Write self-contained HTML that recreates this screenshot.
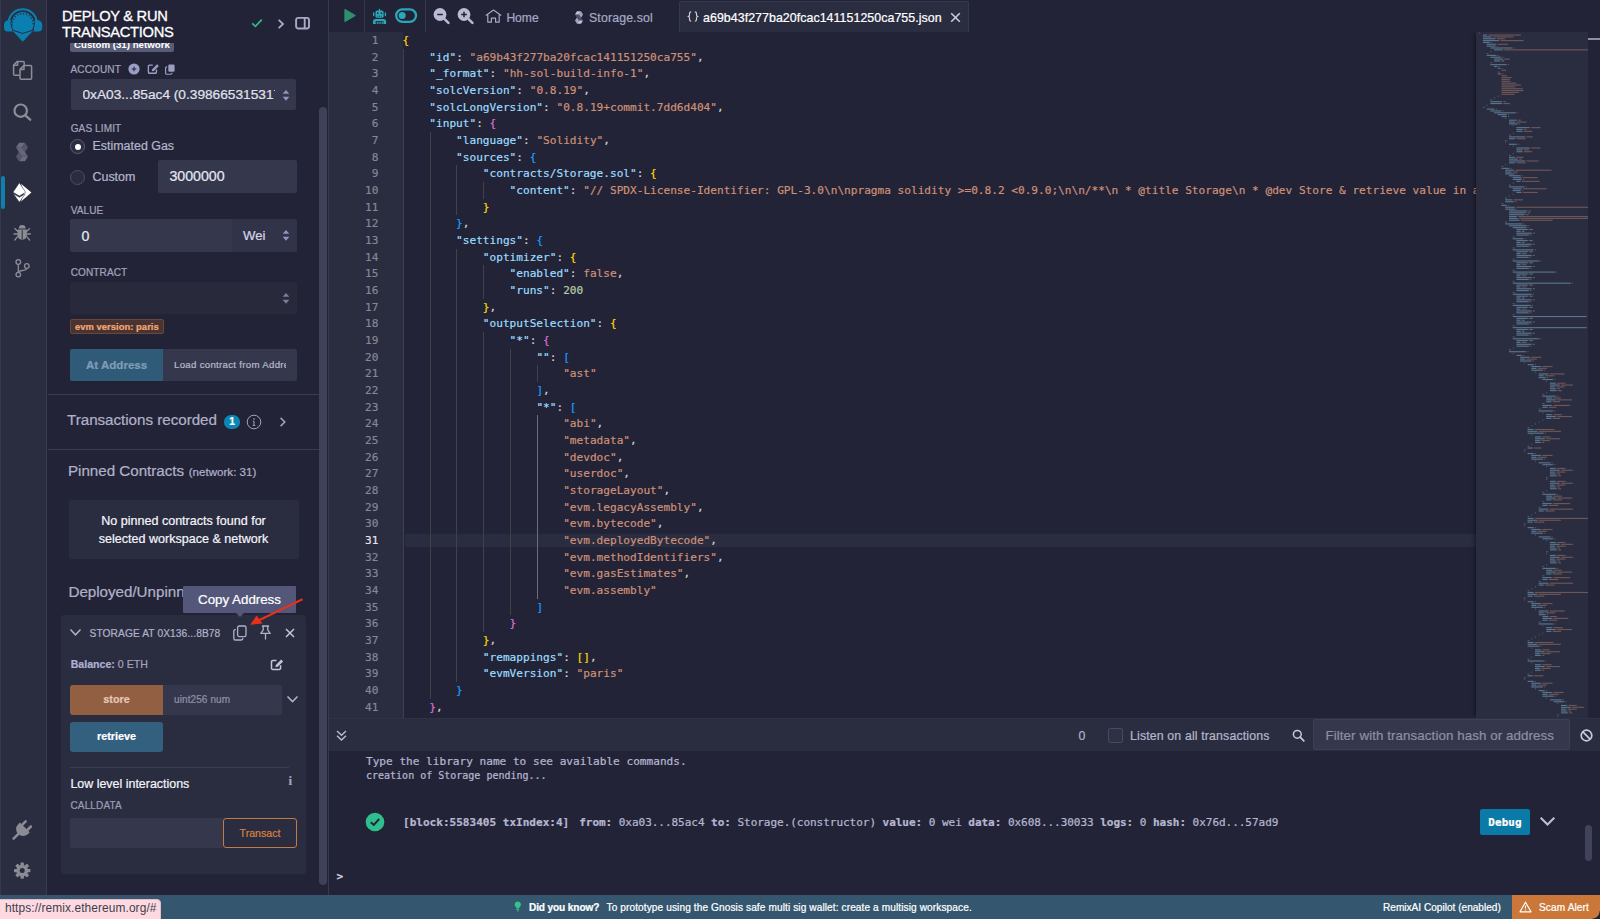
<!DOCTYPE html>
<html lang="en">
<head>
<meta charset="utf-8">
<title>Remix - Ethereum IDE</title>
<style>
*{box-sizing:border-box;margin:0;padding:0}
html,body{width:1600px;height:919px;overflow:hidden;background:#222336}
body{font-family:"Liberation Sans",sans-serif;color:#a2a3bd;font-size:12px;position:relative}
.abs{position:absolute}
#iconpanel{position:absolute;left:0;top:0;width:47px;height:895px;background:#2a2c3f;border-right:1px solid #3a3c51}
#sidepanel{position:absolute;left:47px;top:0;width:281px;height:895px;background:#222336;overflow:hidden}
#main{position:absolute;left:329.4px;top:0;width:1270.6px;height:895px;background:#222336;overflow:hidden}
#gap{position:absolute;left:327.8px;top:0;width:1.6px;height:895px;background:#383a50}
#status{position:absolute;left:0;top:895px;width:1600px;height:24px;background:#34566e}
.t{position:absolute;white-space:nowrap;line-height:1;-webkit-text-stroke:.22px currentColor}
.lbl{position:absolute;white-space:nowrap;line-height:1;font-size:10.05px;color:#a2a3bd;letter-spacing:.1px;-webkit-text-stroke:.22px currentColor}
.inp{position:absolute;background:#35384c;border-radius:2px}
.ico{position:absolute;display:block}
/* editor */
.cl{position:absolute;left:402.6px;height:16.67px;line-height:16.67px;white-space:pre;font-family:"DejaVu Sans Mono","Liberation Mono",monospace;font-size:11.125px;color:#d4d4d4;-webkit-text-stroke:.2px currentColor}
.ln{position:absolute;left:330px;width:48.5px;text-align:right;height:16.67px;line-height:16.67px;font-family:"DejaVu Sans Mono","Liberation Mono",monospace;font-size:11.125px;color:#858699;-webkit-text-stroke:.2px currentColor}
.ln.cur{color:#e4e4ee}
.cl span{-webkit-text-stroke:.2px currentColor}
.k{color:#9cdcfe}.s{color:#ce9178}.p{color:#d4d4d4}.n{color:#b5cea8}.kw{color:#ce9178}
.b0{color:#ffd700}.b1{color:#da70d6}.b2{color:#179fff}
.ig{position:absolute;width:1px;background:#404149}
.ig.act{background:#6c6d78}
.mono{font-family:"DejaVu Sans Mono","Liberation Mono",monospace}
</style>
</head>
<body>
<!-- ICON PANEL -->
<div id="iconpanel">
<div class="abs" style="left:0;top:0;width:1px;height:895px;background:#363850"></div>
<!-- remix logo -->
<svg class="ico" style="left:0;top:0" width="47" height="47" viewBox="0 0 47 47">
 <path d="M8.700 21.500C9.900 13.700 15.600 9.300 22.700 9.300s12.800 4.400 14 12.200" fill="none" stroke="#0b80b0" stroke-width="2.100"/>
 <path d="M12.600 20.200v11.200H7.600a3.600 3.600 0 0 1-3.600-3.600v-3a4.600 4.600 0 0 1 4.600-4.600z" fill="#0b80b0"/>
 <path d="M33.600 20.200v11.200h5a3.600 3.600 0 0 0 3.600-3.600v-3a4.600 4.600 0 0 0-4.600-4.600z" fill="#0b80b0"/>
 <path d="M13.200 31H32.400L22.700 41.300z" fill="#0b80b0" stroke="#0b80b0" stroke-width=".8" stroke-linejoin="round"/>
 <path d="M12.200 28.400A11.700 11.700 0 1 1 33.200 28.400L32.300 30.400 22.700 33.400 13.100 30.400z" fill="#0b80b0" stroke="#2a2035" stroke-width=".9" stroke-linejoin="round"/>
 <path d="M12.300 25.600A10.500 10.500 0 1 1 33.100 25.600" fill="none" stroke="#2a2c3f" stroke-width="1.500" stroke-dasharray="1.250 1.750" opacity=".9"/>
</svg>
<!-- active marker -->
<div class="abs" style="left:1px;top:176px;width:4.300px;height:33px;background:#0f80ae;border-radius:2.500px"></div>
<svg class="ico" style="left:0;top:50px" width="47" height="845" viewBox="0 50 47 845">
 <!-- file explorer -->
 <g fill="none" stroke="#8d8d97" stroke-width="1.500" stroke-linejoin="round">
  <path d="M19.500 75.200H14.600a1 1 0 0 1-1-1V65l3.800-3.600h5.800a1 1 0 0 1 1 1v2.600"/>
  <path d="M17.600 61.600V65.200H13.800"/>
  <path d="M20 69.400l3.800-3.800h6.800a1 1 0 0 1 1 1v11.600a1 1 0 0 1-1 1H21a1 1 0 0 1-1-1z"/>
  <path d="M24 65.800v3.800H20.200"/>
 </g>
 <!-- search -->
 <circle cx="20.700" cy="110.700" r="6.200" fill="none" stroke="#8d8d97" stroke-width="2.200"/>
 <path d="M25.300 115.300L30.200 119.700" stroke="#8d8d97" stroke-width="2.400" stroke-linecap="round"/>
 <!-- solidity -->
 <g>
  <path d="M19 142.800h6l-3 4.800h-6z" fill="#6a6b7c"/><path d="M25 142.800l3 4.800-3 4.600-3-4.600z" fill="#55566a"/><path d="M16 147.600h6l3 4.600h-6z" fill="#77788a" opacity=".75"/>
  <path d="M25 161.200h-6l3-4.600h6z" fill="#6a6b7c"/><path d="M19 161.200l-3-4.600 3-4.600 3 4.600z" fill="#55566a"/><path d="M28 156.600h-6l-3-4.600h6z" fill="#77788a" opacity=".75"/>
 </g>
 <!-- deploy -->
 <path d="M21 183.800L31.400 192.600 21 201.400 24.400 192.600z" fill="#fff"/>
 <path d="M19.400 182.800L25.600 192.300 19.400 196 13 192.300z" fill="#fff" stroke="#2a2c3f" stroke-width=".5"/>
 <path d="M19.400 197.300L25.300 193.800 19.400 202.200 13.300 193.800z" fill="#fff" stroke="#2a2c3f" stroke-width=".5"/>
 <!-- debugger -->
 <g>
  <path d="M18.800 228.400a3.400 3.400 0 0 1 6.800 0z" fill="#8d8d97"/>
  <path d="M17.600 229.600h9.200v5.600a4.600 4.600 0 0 1-9.200 0z" fill="#8d8d97"/>
  <path d="M17.600 231.200L14.800 228.600M17.600 234H14M17.600 236.600L14.800 240M26.800 231.200L29.600 228.600M26.800 234H30.400M26.800 236.600L29.600 240" stroke="#8d8d97" stroke-width="1.300" stroke-linecap="round"/>
  <path d="M22.200 230.200v9.400" stroke="#2a2c3f" stroke-width="1"/>
 </g>
 <!-- git -->
 <g fill="none" stroke="#8d8d97" stroke-width="1.300">
  <circle cx="18.300" cy="262" r="2.300"/><circle cx="18.300" cy="274.600" r="2.300"/><circle cx="26.800" cy="266" r="2.300"/>
  <path d="M18.300 264.400V272.200M26.600 268.400c0 2.800-8.300 1.400-8.300 4"/>
 </g>
 <!-- plugin manager -->
 <g transform="translate(21.700 830.500) rotate(45)" fill="#8b8b95">
  <rect x="-5" y="-10.500" width="2.600" height="7" rx="1.200"/><rect x="2.400" y="-10.500" width="2.600" height="7" rx="1.200"/>
  <path d="M-7 -4.400H7V-2A7 7 0 0 1 -7 -2z"/>
  <rect x="-1.300" y="3.500" width="2.600" height="9.200" rx="1.200"/>
 </g>
 <!-- settings -->
 <g fill="#8b8b95">
  <circle cx="22.200" cy="870.600" r="5.900"/>
  <g transform="rotate(0 22.200 870.600)"><rect x="20.500" y="862.400" width="3.400" height="3.600" rx=".7"/><rect x="20.500" y="875.200" width="3.400" height="3.600" rx=".7"/></g><g transform="rotate(45 22.200 870.600)"><rect x="20.500" y="862.400" width="3.400" height="3.600" rx=".7"/><rect x="20.500" y="875.200" width="3.400" height="3.600" rx=".7"/></g><g transform="rotate(90 22.200 870.600)"><rect x="20.500" y="862.400" width="3.400" height="3.600" rx=".7"/><rect x="20.500" y="875.200" width="3.400" height="3.600" rx=".7"/></g><g transform="rotate(135 22.200 870.600)"><rect x="20.500" y="862.400" width="3.400" height="3.600" rx=".7"/><rect x="20.500" y="875.200" width="3.400" height="3.600" rx=".7"/></g>
 </g>
 <circle cx="22.200" cy="870.600" r="2.500" fill="#2a2c3f"/>
</svg>

</div>

<!-- SIDE PANEL -->
<div id="sidepanel">
<div class="abs" style="left:-47px;top:0;width:1600px;height:919px">
 <!-- header -->
 <div class="t" style="left:62px;top:7.5px;font-size:14.7px;line-height:16.3px;color:#fff;white-space:normal;width:130px;letter-spacing:-.3px;-webkit-text-stroke:.3px #fff">DEPLOY &amp; RUN TRANSACTIONS</div>
 <svg class="ico" style="left:251px;top:17px" width="12" height="12" viewBox="0 0 12 12"><path d="M1.2 6.4 L4.4 9.4 L10.8 2.6" fill="none" stroke="#32ba89" stroke-width="1.7"/></svg>
 <svg class="ico" style="left:277.300px;top:17.500px" width="8" height="12" viewBox="0 0 8 12"><path d="M1.700 1.800 L6 6 L1.700 10.200" fill="none" stroke="#a9aacb" stroke-width="1.800"/></svg>
 <svg class="ico" style="left:295px;top:16px" width="15" height="14" viewBox="0 0 15 14"><rect x="1.100" y="1.900" width="12.900" height="10.600" rx="2.200" fill="none" stroke="#a9aacb" stroke-width="1.900"/><path d="M9.700 1.900 V12.500" stroke="#a9aacb" stroke-width="1.900"/></svg>

 <!-- network badge (clipped on top) -->
 <div class="abs" style="left:70px;top:43px;width:104px;height:9px;overflow:hidden">
  <div class="abs" style="left:0;top:-8px;width:104px;height:16.5px;background:#595c76;border-radius:2px"></div>
  <div class="t" style="left:4px;top:-3.3px;font-size:9.700px;font-weight:bold;color:#fff;letter-spacing:0;-webkit-text-stroke:0">Custom (31) network</div>
 </div>

 <!-- ACCOUNT -->
 <div class="lbl" style="left:70.500px;top:64.700px">ACCOUNT</div>
 <svg class="ico" style="left:128px;top:63px" width="12" height="12" viewBox="0 0 12 12"><circle cx="6" cy="6" r="5.6" fill="#9a9ec4"/><path d="M6 3.700V8.300M3.700 6H8.300" stroke="#222336" stroke-width="1.050"/></svg>
 <svg class="ico" style="left:146.500px;top:62.800px" width="12.600" height="11.600" viewBox="0 0 13 12"><path d="M6 2.2H2.6a1.2 1.2 0 0 0-1.2 1.2v6a1.2 1.2 0 0 0 1.2 1.2h6a1.2 1.2 0 0 0 1.2-1.2V6.6" fill="none" stroke="#9a9ec4" stroke-width="1.4"/><path d="M5 8.6 L5.4 6.4 L10.4 1.4 L12.2 3.2 L7.2 8.2 Z" fill="#9a9ec4"/></svg>
 <svg class="ico" style="left:164.800px;top:63.800px" width="10" height="10.800" viewBox="0 0 11 12"><rect x="3.6" y="0.6" width="7" height="8" rx="1.3" fill="#9a9ec4"/><path d="M2.4 3.2H1.8a1.2 1.2 0 0 0-1.2 1.2v5.8a1.2 1.2 0 0 0 1.2 1.2h4.6a1.2 1.2 0 0 0 1.2-1.2v-.4" fill="none" stroke="#9a9ec4" stroke-width="1.3"/></svg>

 <div class="inp" style="left:71px;top:79.200px;width:225px;height:30.700px"></div>
 <div class="abs" style="left:82.500px;top:86px;width:192.500px;height:18px;overflow:hidden"><div class="t" style="left:0;top:1.5px;font-size:13.700px;color:#e0e1ee">0xA03...85ac4 (0.398665315317</div></div>
 <svg class="ico" style="left:282px;top:88.700px" width="8" height="12.600" viewBox="0 0 7 11"><path d="M0.6 4.200 L3.500 0.800 L6.400 4.200Z M0.600 6.800 L3.500 10.200 L6.400 6.800Z" fill="#9195bd"/></svg>

 <!-- GAS LIMIT -->
 <div class="lbl" style="left:70.7px;top:124px">GAS LIMIT</div>
 <div class="abs" style="left:70px;top:139px;width:15px;height:15px;border-radius:50%;border:1px solid #5b5e78;background:#2a2c40"></div>
 <div class="abs" style="left:74.5px;top:143.5px;width:6px;height:6px;border-radius:50%;background:#fff"></div>
 <div class="t" style="left:92.5px;top:140.2px;font-size:12.45px;color:#b4b5ce">Estimated Gas</div>
 <div class="abs" style="left:70px;top:169.5px;width:15px;height:15px;border-radius:50%;border:1px solid #4b4e66;background:#2a2c40"></div>
 <div class="t" style="left:92.5px;top:171px;font-size:12.45px;color:#b4b5ce">Custom</div>
 <div class="inp" style="left:158px;top:160px;width:139px;height:32.5px"></div>
 <div class="t" style="left:169.4px;top:169.200px;font-size:14.2px;color:#e6e6f2">3000000</div>

 <!-- VALUE -->
 <div class="lbl" style="left:70.7px;top:205.500px">VALUE</div>
 <div class="inp" style="left:70px;top:219px;width:162px;height:33px;border-radius:2px 0 0 2px"></div>
 <div class="inp" style="left:232px;top:219px;width:65px;height:33px;background:#313348;border-radius:0 2px 2px 0"></div>
 <div class="t" style="left:81.5px;top:228.700px;font-size:14.2px;color:#e6e6f2">0</div>
 <div class="t" style="left:243px;top:229px;font-size:13.2px;color:#d5d6e6">Wei</div>
 <svg class="ico" style="left:282px;top:229.200px" width="8" height="12.600" viewBox="0 0 7 11"><path d="M0.6 4.200 L3.500 0.800 L6.400 4.200Z M0.600 6.800 L3.500 10.200 L6.400 6.800Z" fill="#9195bd"/></svg>

 <!-- CONTRACT -->
 <div class="lbl" style="left:70.7px;top:268px">CONTRACT</div>
 <div class="inp" style="left:70px;top:281.500px;width:227px;height:32.500px;background:#282a3c"></div>
 <svg class="ico" style="left:282px;top:291.700px" width="8" height="12.600" viewBox="0 0 7 11"><path d="M0.6 4.200 L3.500 0.800 L6.400 4.200Z M0.600 6.800 L3.500 10.200 L6.400 6.800Z" fill="#7a7c98"/></svg>

 <div class="abs" style="left:70px;top:318.5px;width:93.5px;height:15.5px;background:#4a3433;border:1px solid #6e4635;border-radius:2px"></div>
 <div class="t" style="left:75px;top:321.5px;font-size:9.4px;font-weight:bold;color:#f0a877;letter-spacing:.05px">evm version: paris</div>

 <div class="abs" style="left:70px;top:349px;width:93px;height:31.5px;background:#2f5b78;border-radius:2px 0 0 2px"></div>
 <div class="t" style="left:86px;top:359.5px;font-size:11.550px;font-weight:bold;color:#7f9db3">At Address</div>
 <div class="inp" style="left:163px;top:349px;width:134px;height:31.5px;border-radius:0 2px 2px 0"></div>
 <div class="abs" style="left:174px;top:357px;width:112px;height:16px;overflow:hidden"><div class="t" style="left:0;top:3px;font-size:9.700px;color:#b6b7cc;letter-spacing:.280px">Load contract from Address</div></div>

 <div class="abs" style="left:48px;top:394px;width:271px;height:1px;background:#3a3c52"></div>

 <!-- Transactions recorded -->
 <div class="t" style="left:67px;top:412.200px;font-size:15.2px;color:#b0b1c9;letter-spacing:-.03px">Transactions recorded</div>
 <div class="abs" style="left:224.200px;top:415px;width:15.700px;height:13.500px;border-radius:6.750px;background:#0d86b6"></div>
 <div class="t" style="left:229.300px;top:417px;font-size:10.200px;font-weight:bold;color:#fff">1</div>
 <svg class="ico" style="left:246.400px;top:413.700px" width="16" height="16" viewBox="0 0 16 16"><circle cx="8" cy="8" r="6.8" fill="none" stroke="#a2a3bd" stroke-width="1"/><path d="M8 7.2V11.2M6.8 11.4H9.2M6.9 7.2H8" stroke="#a2a3bd" stroke-width="1" fill="none"/><circle cx="8" cy="5" r=".8" fill="#a2a3bd"/></svg>
 <svg class="ico" style="left:279px;top:416.200px" width="8" height="12" viewBox="0 0 8 12"><path d="M1.600 1.900 L5.800 6 L1.600 10.100" fill="none" stroke="#a2a3bd" stroke-width="1.5"/></svg>

 <div class="abs" style="left:48px;top:449px;width:271px;height:1px;background:#3a3c52"></div>

 <!-- Pinned Contracts -->
 <div class="t" style="left:68px;top:463px;font-size:15.2px;color:#b0b1c9;letter-spacing:-.03px">Pinned Contracts <span style="font-size:11.550px;letter-spacing:.02px;margin-left:.5px">(network: 31)</span></div>
 <div class="abs" style="left:68.500px;top:499.500px;width:230.500px;height:59.500px;background:#2a2c3f;border-radius:3px"></div>
 <div class="t" style="left:68px;top:513.3px;width:231px;text-align:center;white-space:normal;font-size:12.550px;line-height:17.6px;color:#f4f4fb">No pinned contracts found for<br>selected workspace &amp; network</div>

 <!-- Deployed -->
 <div class="t" style="left:68.500px;top:583.700px;font-size:15.2px;color:#b0b1c9;letter-spacing:-.03px">Deployed/Unpinned Contracts</div>

 <!-- Instance card -->
 <div class="abs" style="left:61px;top:615px;width:245px;height:258.500px;background:#2a2c3f;border-radius:3px"></div>
 <svg class="ico" style="left:68.5px;top:628px" width="13" height="9" viewBox="0 0 13 9"><path d="M1.5 1.5 L6.5 6.8 L11.5 1.5" fill="none" stroke="#b0b1c9" stroke-width="1.5"/></svg>
 <div class="t" style="left:89.5px;top:629px;font-size:10.2px;color:#b0b1c9;letter-spacing:.1px">STORAGE AT 0X136...8B78</div>
 <svg class="ico" style="left:232.5px;top:625px" width="14" height="16" viewBox="0 0 14 16"><rect x="4.6" y="1" width="8.4" height="10.6" rx="1.6" fill="none" stroke="#b0b1c9" stroke-width="1.3"/><path d="M2.8 4.6H2.4A1.6 1.6 0 0 0 .8 6.2v7.2A1.6 1.6 0 0 0 2.4 15h5.8a1.6 1.6 0 0 0 1.6-1.6v-.4" fill="none" stroke="#b0b1c9" stroke-width="1.3"/></svg>
 <svg class="ico" style="left:259px;top:625px" width="13" height="15" viewBox="0 0 13 15"><path d="M3.4 1H9.6M4.2 1.2V5.2L1.8 8.4H11.2L8.8 5.2V1.2M6.5 8.4V14" fill="none" stroke="#b0b1c9" stroke-width="1.3" stroke-linejoin="round" stroke-linecap="round"/></svg>
 <svg class="ico" style="left:285px;top:628px" width="10" height="10" viewBox="0 0 10 10"><path d="M1 1L9 9M9 1L1 9" stroke="#c5c6da" stroke-width="1.5"/></svg>

 <div class="t" style="left:70.700px;top:659px;font-size:10.6px;color:#a2a3bd"><b style="color:#aeb0d2">Balance:</b> 0 ETH</div>
 <svg class="ico" style="left:270px;top:657.700px" width="14" height="13" viewBox="0 0 13 12"><path d="M6 2.2H2.6a1.2 1.2 0 0 0-1.2 1.2v6a1.2 1.2 0 0 0 1.2 1.2h6a1.2 1.2 0 0 0 1.2-1.2V6.6" fill="none" stroke="#c5c6da" stroke-width="1.4"/><path d="M5 8.6 L5.4 6.4 L10.4 1.4 L12.2 3.2 L7.2 8.2 Z" fill="#c5c6da"/></svg>

 <div class="abs" style="left:70px;top:684.5px;width:93px;height:30px;background:#925f43;border-radius:3px 0 0 3px"></div>
 <div class="t" style="left:70px;top:694px;width:93px;text-align:center;font-size:10.8px;font-weight:bold;color:#e3c7b4">store</div>
 <div class="inp" style="left:163px;top:684.5px;width:119px;height:30px;border-radius:0 2px 2px 0"></div>
 <div class="t" style="left:174px;top:694.5px;font-size:10px;color:#8d8fa8;letter-spacing:.1px">uint256 num</div>
 <svg class="ico" style="left:286px;top:694.5px" width="13" height="9" viewBox="0 0 13 9"><path d="M1.5 1.5 L6.5 6.6 L11.5 1.5" fill="none" stroke="#b0b1c9" stroke-width="1.5"/></svg>

 <div class="abs" style="left:70px;top:721.5px;width:93px;height:30px;background:#33607f;border-radius:3px"></div>
 <div class="t" style="left:70px;top:731px;width:93px;text-align:center;font-size:10.8px;font-weight:bold;color:#fff">retrieve</div>

 <div class="abs" style="left:70px;top:766.5px;width:219px;height:1px;background:#3b3d53"></div>
 <div class="t" style="left:70.400px;top:777.600px;font-size:12.450px;color:#f4f4fb">Low level interactions</div>
 <div class="t" style="left:288.5px;top:774px;font-size:13px;font-family:'Liberation Serif',serif;font-weight:bold;color:#a2a3bd">i</div>
 <div class="lbl" style="left:70.500px;top:800.700px;font-size:10.050px;color:#9c9db4">CALLDATA</div>
 <div class="inp" style="left:70px;top:818px;width:153px;height:30px;border-radius:2px 0 0 2px"></div>
 <div class="abs" style="left:223px;top:818px;width:74px;height:30px;border:1.300px solid #c47a42;border-radius:3px"></div>
 <div class="t" style="left:223px;top:828px;width:74px;text-align:center;font-size:10.6px;color:#d98040">Transact</div>

 <!-- tooltip -->
 <div class="abs" style="left:183px;top:586px;width:113px;height:26.5px;background:#54577a;border-radius:1px"></div>
 <div class="abs" style="left:235.5px;top:612.5px;width:0;height:0;border-left:4.5px solid transparent;border-right:4.5px solid transparent;border-top:4.5px solid #54577a"></div>
 <div class="t" style="left:183px;top:592.5px;width:113px;text-align:center;font-size:13.3px;color:#fff">Copy Address</div>
 <!-- red arrow -->
 <svg class="ico" style="left:244px;top:594px" width="62" height="36" viewBox="244 594 62 36"><path d="M302.500 599.300 L259 620.300" stroke="#e8301c" stroke-width="2.100" fill="none"/><path d="M250.200 624.700 L256.600 615.600 L262.400 623.600 Z" fill="#e8301c"/></svg>

 <!-- scrollbar -->
 <div class="abs" style="left:319px;top:107px;width:8px;height:778px;background:#3f4158;border-radius:4px"></div>
</div>

</div>
<div id="gap"></div>

<!-- MAIN PANEL -->
<div id="main">
<div class="abs" style="left:-329.4px;top:0;width:1600px;height:919px">
 <!-- toolbar -->
 <svg class="ico" style="left:343px;top:8px" width="14" height="15" viewBox="0 0 14 15"><path d="M1.900 1.300L12.400 7.500 1.900 13.700z" fill="#2e8f6e" stroke="#2e8f6e" stroke-width="1" stroke-linejoin="round"/></svg>
 <div class="abs" style="left:364px;top:0;width:1px;height:32px;background:#35374d"></div>
 <svg class="ico" style="left:372px;top:7.500px" width="16" height="17" viewBox="0 0 16 17"><g fill="#2aa7b8"><rect x="6.900" y=".8" width="1.200" height="2.200"/><rect x="3.500" y="2.500" width="8.100" height="7.300" rx="1.600"/><rect x="1" y="4.300" width="1.400" height="3.900" rx=".6"/><rect x="12.700" y="4.300" width="1.400" height="3.900" rx=".6"/><path d="M1 15.900V13.500a2.600 2.600 0 0 1 2.600-2.600h7.900a2.600 2.600 0 0 1 2.600 2.600V15.900H11.400V13.100H3.700V15.900z"/><rect x="4.700" y="13.700" width="1.100" height="2.200"/><rect x="6.500" y="13.700" width="1.100" height="2.200"/><rect x="8.300" y="13.700" width="1.100" height="2.200"/><rect x="10" y="13.700" width=".9" height="2.200"/></g><g fill="#222336"><rect x="5" y="4.400" width="1.500" height="1.600" rx=".3"/><rect x="8.700" y="4.400" width="1.500" height="1.600" rx=".3"/><rect x="5.300" y="7.700" width=".9" height=".8"/><rect x="7.100" y="7.700" width=".9" height=".8"/><rect x="8.900" y="7.700" width=".9" height=".8"/></g></svg>
 <svg class="ico" style="left:394px;top:8px" width="24" height="16" viewBox="0 0 24 16"><rect x="2.200" y="1.300" width="19.800" height="12.500" rx="6.250" fill="none" stroke="#2aa7b8" stroke-width="2.300"/><circle cx="8.200" cy="7.550" r="3.500" fill="#2aa7b8"/></svg>
 <div class="abs" style="left:424.500px;top:0;width:1px;height:32px;background:#35374d"></div>
 <svg class="ico" style="left:432.300px;top:6.800px" width="18" height="18" viewBox="0 0 18 18"><path d="M12.600 12.100L16.400 15.900" stroke="#b9bad3" stroke-width="2.500" stroke-linecap="round"/><circle cx="8" cy="7.500" r="6.400" fill="#b9bad3"/><path d="M5.200 7.500H10.800" stroke="#222336" stroke-width="1.500"/></svg>
 <svg class="ico" style="left:455.900px;top:6.800px" width="18" height="18" viewBox="0 0 18 18"><path d="M12.600 12.100L16.400 15.900" stroke="#b9bad3" stroke-width="2.500" stroke-linecap="round"/><circle cx="8" cy="7.500" r="6.400" fill="#b9bad3"/><path d="M5.200 7.500H10.800M8 4.700V10.300" stroke="#222336" stroke-width="1.500"/></svg>
 <!-- Home tab -->
 <svg class="ico" style="left:485px;top:8.500px" width="17" height="15" viewBox="0 0 17 15"><path d="M.8 6.400L8.500 1l7.700 5.400M2.800 5.400V13.200h3.600V9.200h4.200V13.200h3.600V5.400" fill="none" stroke="#a7a8c4" stroke-width="1.200" stroke-linejoin="round"/></svg>
 <div class="t" style="left:506.400px;top:11.500px;font-size:12.100px;color:#a7a8c6">Home</div>
 <!-- Storage.sol tab -->
 <svg class="ico" style="left:573.500px;top:10.500px" width="10" height="13" viewBox="15.500 142.300 13 19.400"><path d="M19 142.800h6l-3 4.800h-6z" fill="#c3c4da"/><path d="M25 142.800l3 4.800-3 4.600-3-4.600z" fill="#a3a5c0"/><path d="M16 147.600h6l3 4.600h-6z" fill="#b4b6cf" opacity=".3"/><path d="M25 161.200h-6l3-4.600h6z" fill="#c3c4da"/><path d="M19 161.200l-3-4.600 3-4.600 3 4.600z" fill="#a3a5c0"/><path d="M28 156.600h-6l-3-4.600h6z" fill="#b4b6cf" opacity=".3"/></svg>
 <div class="t" style="left:589px;top:11.500px;font-size:12.300px;color:#a7a8c4;letter-spacing:.15px">Storage.sol</div>
 <!-- active tab -->
 <div class="abs" style="left:679px;top:.5px;width:290px;height:31px;background:#2a2c3f;border:1px solid #363850;border-bottom:none;border-radius:2px 2px 0 0"></div>
 <svg class="ico" style="left:686.500px;top:10.500px" width="12" height="11" viewBox="0 0 12 11"><path d="M4.200.8C2.700.8 2.500 1.500 2.500 2.500V4.100C2.500 4.900 2 5.500 1 5.500 2 5.500 2.500 6.100 2.500 6.900V8.500C2.500 9.500 2.700 10.200 4.200 10.200M7.800.8C9.300.8 9.500 1.500 9.500 2.500V4.100C9.500 4.900 10 5.500 11 5.500 10 5.500 9.500 6.100 9.500 6.900V8.500C9.500 9.500 9.300 10.200 7.800 10.200" fill="none" stroke="#cfd0e0" stroke-width="1.150" stroke-linejoin="round"/></svg>
 <div class="t" style="left:703px;top:11.500px;font-size:12.400px;color:#fff;letter-spacing:.05px">a69b43f277ba20fcac141151250ca755.json</div>
 <svg class="ico" style="left:949.500px;top:11.800px" width="11" height="11" viewBox="0 0 11 11"><path d="M1.200 1.200L9.800 9.800M9.800 1.200L1.200 9.800" stroke="#c8c9dc" stroke-width="1.600"/></svg>
</div>

</div>

<!-- editor pieces positioned in page coords -->
<div id="editor" style="position:absolute;left:329px;top:32px;width:1271px;height:686px;overflow:hidden">
 <div style="position:absolute;left:-329px;top:-32px;width:1600px;height:919px">
  <div class="abs" style="left:329.4px;top:32px;width:73.3px;height:686px;background:#2a2c3f"></div>
  <div class="abs" style="left:405px;top:533.7px;width:1071px;height:13.3px;background:#2a2c40"></div>
<div class="ig" style="left:402.9px;top:48.7px;height:669.3px"></div>
<div class="ig" style="left:429.6px;top:132.0px;height:566.8px"></div>
<div class="ig" style="left:456.3px;top:165.4px;height:50.0px"></div>
<div class="ig" style="left:456.3px;top:248.7px;height:433.4px"></div>
<div class="ig" style="left:483.1px;top:182.0px;height:16.7px"></div>
<div class="ig" style="left:483.1px;top:265.4px;height:33.3px"></div>
<div class="ig" style="left:483.1px;top:332.1px;height:300.1px"></div>
<div class="ig" style="left:509.8px;top:348.7px;height:266.7px"></div>
<div class="ig" style="left:536.5px;top:365.4px;height:16.7px"></div>
<div class="ig act" style="left:536.5px;top:415.4px;height:183.4px"></div>
<div class="ln" style="top:33.00px">1</div>
<div class="ln" style="top:49.67px">2</div>
<div class="ln" style="top:66.34px">3</div>
<div class="ln" style="top:83.01px">4</div>
<div class="ln" style="top:99.68px">5</div>
<div class="ln" style="top:116.35px">6</div>
<div class="ln" style="top:133.02px">7</div>
<div class="ln" style="top:149.69px">8</div>
<div class="ln" style="top:166.36px">9</div>
<div class="ln" style="top:183.03px">10</div>
<div class="ln" style="top:199.70px">11</div>
<div class="ln" style="top:216.37px">12</div>
<div class="ln" style="top:233.04px">13</div>
<div class="ln" style="top:249.71px">14</div>
<div class="ln" style="top:266.38px">15</div>
<div class="ln" style="top:283.05px">16</div>
<div class="ln" style="top:299.72px">17</div>
<div class="ln" style="top:316.39px">18</div>
<div class="ln" style="top:333.06px">19</div>
<div class="ln" style="top:349.73px">20</div>
<div class="ln" style="top:366.40px">21</div>
<div class="ln" style="top:383.07px">22</div>
<div class="ln" style="top:399.74px">23</div>
<div class="ln" style="top:416.41px">24</div>
<div class="ln" style="top:433.08px">25</div>
<div class="ln" style="top:449.75px">26</div>
<div class="ln" style="top:466.42px">27</div>
<div class="ln" style="top:483.09px">28</div>
<div class="ln" style="top:499.76px">29</div>
<div class="ln" style="top:516.43px">30</div>
<div class="ln cur" style="top:533.10px">31</div>
<div class="ln" style="top:549.77px">32</div>
<div class="ln" style="top:566.44px">33</div>
<div class="ln" style="top:583.11px">34</div>
<div class="ln" style="top:599.78px">35</div>
<div class="ln" style="top:616.45px">36</div>
<div class="ln" style="top:633.12px">37</div>
<div class="ln" style="top:649.79px">38</div>
<div class="ln" style="top:666.46px">39</div>
<div class="ln" style="top:683.13px">40</div>
<div class="ln" style="top:699.80px">41</div>
<div class="cl" style="top:33.00px"><span class="b0">{</span></div>
<div class="cl" style="top:49.67px">    <span class="k">"id"</span><span class="p">:</span> <span class="s">"a69b43f277ba20fcac141151250ca755"</span><span class="p">,</span></div>
<div class="cl" style="top:66.34px">    <span class="k">"_format"</span><span class="p">:</span> <span class="s">"hh-sol-build-info-1"</span><span class="p">,</span></div>
<div class="cl" style="top:83.01px">    <span class="k">"solcVersion"</span><span class="p">:</span> <span class="s">"0.8.19"</span><span class="p">,</span></div>
<div class="cl" style="top:99.68px">    <span class="k">"solcLongVersion"</span><span class="p">:</span> <span class="s">"0.8.19+commit.7dd6d404"</span><span class="p">,</span></div>
<div class="cl" style="top:116.35px">    <span class="k">"input"</span><span class="p">:</span> <span class="b1">{</span></div>
<div class="cl" style="top:133.02px">        <span class="k">"language"</span><span class="p">:</span> <span class="s">"Solidity"</span><span class="p">,</span></div>
<div class="cl" style="top:149.69px">        <span class="k">"sources"</span><span class="p">:</span> <span class="b2">{</span></div>
<div class="cl" style="top:166.36px">            <span class="k">"contracts/Storage.sol"</span><span class="p">:</span> <span class="b0">{</span></div>
<div class="cl" style="top:183.03px">                <span class="k">"content"</span><span class="p">:</span> <span class="s">"// SPDX-License-Identifier: GPL-3.0\n\npragma solidity &gt;=0.8.2 &lt;0.9.0;\n\n/**\n * @title Storage\n * @dev Store &amp; retrieve value in a variable\n * @custom:dev-run-script ./scripts/deploy_with_ethers.ts\n */"</span></div>
<div class="cl" style="top:199.70px">            <span class="b0">}</span></div>
<div class="cl" style="top:216.37px">        <span class="b2">}</span><span class="p">,</span></div>
<div class="cl" style="top:233.04px">        <span class="k">"settings"</span><span class="p">:</span> <span class="b2">{</span></div>
<div class="cl" style="top:249.71px">            <span class="k">"optimizer"</span><span class="p">:</span> <span class="b0">{</span></div>
<div class="cl" style="top:266.38px">                <span class="k">"enabled"</span><span class="p">:</span> <span class="kw">false</span><span class="p">,</span></div>
<div class="cl" style="top:283.05px">                <span class="k">"runs"</span><span class="p">:</span> <span class="n">200</span></div>
<div class="cl" style="top:299.72px">            <span class="b0">}</span><span class="p">,</span></div>
<div class="cl" style="top:316.39px">            <span class="k">"outputSelection"</span><span class="p">:</span> <span class="b0">{</span></div>
<div class="cl" style="top:333.06px">                <span class="k">"*"</span><span class="p">:</span> <span class="b1">{</span></div>
<div class="cl" style="top:349.73px">                    <span class="k">""</span><span class="p">:</span> <span class="b2">[</span></div>
<div class="cl" style="top:366.40px">                        <span class="s">"ast"</span></div>
<div class="cl" style="top:383.07px">                    <span class="b2">]</span><span class="p">,</span></div>
<div class="cl" style="top:399.74px">                    <span class="k">"*"</span><span class="p">:</span> <span class="b2">[</span></div>
<div class="cl" style="top:416.41px">                        <span class="s">"abi"</span><span class="p">,</span></div>
<div class="cl" style="top:433.08px">                        <span class="s">"metadata"</span><span class="p">,</span></div>
<div class="cl" style="top:449.75px">                        <span class="s">"devdoc"</span><span class="p">,</span></div>
<div class="cl" style="top:466.42px">                        <span class="s">"userdoc"</span><span class="p">,</span></div>
<div class="cl" style="top:483.09px">                        <span class="s">"storageLayout"</span><span class="p">,</span></div>
<div class="cl" style="top:499.76px">                        <span class="s">"evm.legacyAssembly"</span><span class="p">,</span></div>
<div class="cl" style="top:516.43px">                        <span class="s">"evm.bytecode"</span><span class="p">,</span></div>
<div class="cl" style="top:533.10px">                        <span class="s">"evm.deployedBytecode"</span><span class="p">,</span></div>
<div class="cl" style="top:549.77px">                        <span class="s">"evm.methodIdentifiers"</span><span class="p">,</span></div>
<div class="cl" style="top:566.44px">                        <span class="s">"evm.gasEstimates"</span><span class="p">,</span></div>
<div class="cl" style="top:583.11px">                        <span class="s">"evm.assembly"</span></div>
<div class="cl" style="top:599.78px">                    <span class="b2">]</span></div>
<div class="cl" style="top:616.45px">                <span class="b1">}</span></div>
<div class="cl" style="top:633.12px">            <span class="b0">}</span><span class="p">,</span></div>
<div class="cl" style="top:649.79px">            <span class="k">"remappings"</span><span class="p">:</span> <span class="b0">[</span><span class="b0">]</span><span class="p">,</span></div>
<div class="cl" style="top:666.46px">            <span class="k">"evmVersion"</span><span class="p">:</span> <span class="s">"paris"</span></div>
<div class="cl" style="top:683.13px">        <span class="b2">}</span></div>
<div class="cl" style="top:699.80px">    <span class="b1">}</span><span class="p">,</span></div>
  <div class="abs" style="left:1476px;top:32px;width:112px;height:686px;background:#2a2c3f;box-shadow:-3px 0 4px -2px rgba(0,0,0,.5)"></div>
  <div class="abs" style="left:1588px;top:32px;width:12px;height:686px;background:#222336"></div>
  <div class="abs" style="left:1588px;top:37.800px;width:12px;height:2px;background:#8e8fa3"></div>
  <div class="abs" style="left:1476px;top:32px;width:124px;height:687px"><svg class="mmsvg" width="124" height="687" viewBox="1476 32 124 687"><rect x="1479.2" y="32.60" width="0.9" height="1.15" fill="#d4d4d4" fill-opacity="0.3"/><rect x="1482.9" y="34.45" width="3.7" height="1.15" fill="#9cdcfe" fill-opacity="0.42"/><rect x="1486.6" y="34.45" width="0.9" height="1.15" fill="#d4d4d4" fill-opacity="0.25"/><rect x="1488.5" y="34.45" width="31.6" height="1.15" fill="#ce9178" fill-opacity="0.42"/><rect x="1520.1" y="34.45" width="0.9" height="1.15" fill="#d4d4d4" fill-opacity="0.25"/><rect x="1482.9" y="36.30" width="8.4" height="1.15" fill="#9cdcfe" fill-opacity="0.42"/><rect x="1491.3" y="36.30" width="0.9" height="1.15" fill="#d4d4d4" fill-opacity="0.25"/><rect x="1493.2" y="36.30" width="19.5" height="1.15" fill="#ce9178" fill-opacity="0.42"/><rect x="1512.7" y="36.30" width="0.9" height="1.15" fill="#d4d4d4" fill-opacity="0.25"/><rect x="1482.9" y="38.16" width="12.1" height="1.15" fill="#9cdcfe" fill-opacity="0.42"/><rect x="1495.0" y="38.16" width="0.9" height="1.15" fill="#d4d4d4" fill-opacity="0.25"/><rect x="1496.9" y="38.16" width="7.4" height="1.15" fill="#ce9178" fill-opacity="0.42"/><rect x="1504.3" y="38.16" width="0.9" height="1.15" fill="#d4d4d4" fill-opacity="0.25"/><rect x="1482.9" y="40.01" width="15.8" height="1.15" fill="#9cdcfe" fill-opacity="0.42"/><rect x="1498.7" y="40.01" width="0.9" height="1.15" fill="#d4d4d4" fill-opacity="0.25"/><rect x="1500.6" y="40.01" width="22.3" height="1.15" fill="#ce9178" fill-opacity="0.42"/><rect x="1522.9" y="40.01" width="0.9" height="1.15" fill="#d4d4d4" fill-opacity="0.25"/><rect x="1482.9" y="41.86" width="6.5" height="1.15" fill="#9cdcfe" fill-opacity="0.42"/><rect x="1489.4" y="41.86" width="0.9" height="1.15" fill="#d4d4d4" fill-opacity="0.25"/><rect x="1491.3" y="41.86" width="0.9" height="1.15" fill="#d4d4d4" fill-opacity="0.3"/><rect x="1486.6" y="43.71" width="9.3" height="1.15" fill="#9cdcfe" fill-opacity="0.42"/><rect x="1495.9" y="43.71" width="0.9" height="1.15" fill="#d4d4d4" fill-opacity="0.25"/><rect x="1497.8" y="43.71" width="9.3" height="1.15" fill="#ce9178" fill-opacity="0.42"/><rect x="1507.1" y="43.71" width="0.9" height="1.15" fill="#d4d4d4" fill-opacity="0.25"/><rect x="1486.6" y="45.56" width="8.4" height="1.15" fill="#9cdcfe" fill-opacity="0.42"/><rect x="1495.0" y="45.56" width="0.9" height="1.15" fill="#d4d4d4" fill-opacity="0.25"/><rect x="1496.9" y="45.56" width="0.9" height="1.15" fill="#d4d4d4" fill-opacity="0.3"/><rect x="1490.4" y="47.42" width="21.4" height="1.15" fill="#9cdcfe" fill-opacity="0.42"/><rect x="1511.8" y="47.42" width="0.9" height="1.15" fill="#d4d4d4" fill-opacity="0.25"/><rect x="1513.6" y="47.42" width="0.9" height="1.15" fill="#d4d4d4" fill-opacity="0.3"/><rect x="1494.1" y="49.27" width="8.4" height="1.15" fill="#9cdcfe" fill-opacity="0.42"/><rect x="1502.5" y="49.27" width="0.9" height="1.15" fill="#d4d4d4" fill-opacity="0.25"/><rect x="1504.3" y="49.27" width="83.7" height="1.15" fill="#ce9178" fill-opacity="0.42"/><rect x="1490.4" y="51.12" width="0.9" height="1.15" fill="#d4d4d4" fill-opacity="0.3"/><rect x="1486.6" y="52.97" width="0.9" height="1.15" fill="#d4d4d4" fill-opacity="0.3"/><rect x="1487.6" y="52.97" width="0.9" height="1.15" fill="#d4d4d4" fill-opacity="0.25"/><rect x="1486.6" y="54.82" width="9.3" height="1.15" fill="#9cdcfe" fill-opacity="0.42"/><rect x="1495.9" y="54.82" width="0.9" height="1.15" fill="#d4d4d4" fill-opacity="0.25"/><rect x="1497.8" y="54.82" width="0.9" height="1.15" fill="#d4d4d4" fill-opacity="0.3"/><rect x="1490.4" y="56.68" width="10.2" height="1.15" fill="#9cdcfe" fill-opacity="0.42"/><rect x="1500.6" y="56.68" width="0.9" height="1.15" fill="#d4d4d4" fill-opacity="0.25"/><rect x="1502.5" y="56.68" width="0.9" height="1.15" fill="#d4d4d4" fill-opacity="0.3"/><rect x="1494.1" y="58.53" width="8.4" height="1.15" fill="#9cdcfe" fill-opacity="0.42"/><rect x="1502.5" y="58.53" width="0.9" height="1.15" fill="#d4d4d4" fill-opacity="0.25"/><rect x="1504.3" y="58.53" width="4.7" height="1.15" fill="#ce9178" fill-opacity="0.42"/><rect x="1509.0" y="58.53" width="0.9" height="1.15" fill="#d4d4d4" fill-opacity="0.25"/><rect x="1494.1" y="60.38" width="5.6" height="1.15" fill="#9cdcfe" fill-opacity="0.42"/><rect x="1499.7" y="60.38" width="0.9" height="1.15" fill="#d4d4d4" fill-opacity="0.25"/><rect x="1501.5" y="60.38" width="2.8" height="1.15" fill="#b5cea8" fill-opacity="0.42"/><rect x="1490.4" y="62.23" width="0.9" height="1.15" fill="#d4d4d4" fill-opacity="0.3"/><rect x="1491.3" y="62.23" width="0.9" height="1.15" fill="#d4d4d4" fill-opacity="0.25"/><rect x="1490.4" y="64.08" width="15.8" height="1.15" fill="#9cdcfe" fill-opacity="0.42"/><rect x="1506.2" y="64.08" width="0.9" height="1.15" fill="#d4d4d4" fill-opacity="0.25"/><rect x="1508.0" y="64.08" width="0.9" height="1.15" fill="#d4d4d4" fill-opacity="0.3"/><rect x="1494.1" y="65.94" width="2.8" height="1.15" fill="#9cdcfe" fill-opacity="0.42"/><rect x="1496.9" y="65.94" width="0.9" height="1.15" fill="#d4d4d4" fill-opacity="0.25"/><rect x="1498.7" y="65.94" width="0.9" height="1.15" fill="#d4d4d4" fill-opacity="0.3"/><rect x="1497.8" y="67.79" width="1.9" height="1.15" fill="#9cdcfe" fill-opacity="0.42"/><rect x="1499.7" y="67.79" width="0.9" height="1.15" fill="#d4d4d4" fill-opacity="0.25"/><rect x="1501.5" y="67.79" width="0.9" height="1.15" fill="#d4d4d4" fill-opacity="0.3"/><rect x="1501.5" y="69.64" width="4.7" height="1.15" fill="#ce9178" fill-opacity="0.42"/><rect x="1497.8" y="71.49" width="0.9" height="1.15" fill="#d4d4d4" fill-opacity="0.3"/><rect x="1498.7" y="71.49" width="0.9" height="1.15" fill="#d4d4d4" fill-opacity="0.25"/><rect x="1497.8" y="73.34" width="2.8" height="1.15" fill="#9cdcfe" fill-opacity="0.42"/><rect x="1500.6" y="73.34" width="0.9" height="1.15" fill="#d4d4d4" fill-opacity="0.25"/><rect x="1502.5" y="73.34" width="0.9" height="1.15" fill="#d4d4d4" fill-opacity="0.3"/><rect x="1501.5" y="75.20" width="4.7" height="1.15" fill="#ce9178" fill-opacity="0.42"/><rect x="1506.2" y="75.20" width="0.9" height="1.15" fill="#d4d4d4" fill-opacity="0.25"/><rect x="1501.5" y="77.05" width="9.3" height="1.15" fill="#ce9178" fill-opacity="0.42"/><rect x="1510.8" y="77.05" width="0.9" height="1.15" fill="#d4d4d4" fill-opacity="0.25"/><rect x="1501.5" y="78.90" width="7.4" height="1.15" fill="#ce9178" fill-opacity="0.42"/><rect x="1509.0" y="78.90" width="0.9" height="1.15" fill="#d4d4d4" fill-opacity="0.25"/><rect x="1501.5" y="80.75" width="8.4" height="1.15" fill="#ce9178" fill-opacity="0.42"/><rect x="1509.9" y="80.75" width="0.9" height="1.15" fill="#d4d4d4" fill-opacity="0.25"/><rect x="1501.5" y="82.60" width="14.0" height="1.15" fill="#ce9178" fill-opacity="0.42"/><rect x="1515.5" y="82.60" width="0.9" height="1.15" fill="#d4d4d4" fill-opacity="0.25"/><rect x="1501.5" y="84.46" width="18.6" height="1.15" fill="#ce9178" fill-opacity="0.42"/><rect x="1520.1" y="84.46" width="0.9" height="1.15" fill="#d4d4d4" fill-opacity="0.25"/><rect x="1501.5" y="86.31" width="13.0" height="1.15" fill="#ce9178" fill-opacity="0.42"/><rect x="1514.5" y="86.31" width="0.9" height="1.15" fill="#d4d4d4" fill-opacity="0.25"/><rect x="1501.5" y="88.16" width="20.5" height="1.15" fill="#ce9178" fill-opacity="0.42"/><rect x="1522.0" y="88.16" width="0.9" height="1.15" fill="#d4d4d4" fill-opacity="0.25"/><rect x="1501.5" y="90.01" width="21.4" height="1.15" fill="#ce9178" fill-opacity="0.42"/><rect x="1522.9" y="90.01" width="0.9" height="1.15" fill="#d4d4d4" fill-opacity="0.25"/><rect x="1501.5" y="91.86" width="16.7" height="1.15" fill="#ce9178" fill-opacity="0.42"/><rect x="1518.3" y="91.86" width="0.9" height="1.15" fill="#d4d4d4" fill-opacity="0.25"/><rect x="1501.5" y="93.72" width="13.0" height="1.15" fill="#ce9178" fill-opacity="0.42"/><rect x="1497.8" y="95.57" width="0.9" height="1.15" fill="#d4d4d4" fill-opacity="0.3"/><rect x="1494.1" y="97.42" width="0.9" height="1.15" fill="#d4d4d4" fill-opacity="0.3"/><rect x="1490.4" y="99.27" width="0.9" height="1.15" fill="#d4d4d4" fill-opacity="0.3"/><rect x="1491.3" y="99.27" width="0.9" height="1.15" fill="#d4d4d4" fill-opacity="0.25"/><rect x="1490.4" y="101.12" width="11.2" height="1.15" fill="#9cdcfe" fill-opacity="0.42"/><rect x="1501.5" y="101.12" width="0.9" height="1.15" fill="#d4d4d4" fill-opacity="0.25"/><rect x="1503.4" y="101.12" width="0.9" height="1.15" fill="#d4d4d4" fill-opacity="0.3"/><rect x="1504.3" y="101.12" width="0.9" height="1.15" fill="#d4d4d4" fill-opacity="0.3"/><rect x="1505.2" y="101.12" width="0.9" height="1.15" fill="#d4d4d4" fill-opacity="0.25"/><rect x="1490.4" y="102.98" width="11.2" height="1.15" fill="#9cdcfe" fill-opacity="0.42"/><rect x="1501.5" y="102.98" width="0.9" height="1.15" fill="#d4d4d4" fill-opacity="0.25"/><rect x="1503.4" y="102.98" width="6.5" height="1.15" fill="#ce9178" fill-opacity="0.42"/><rect x="1486.6" y="104.83" width="0.9" height="1.15" fill="#d4d4d4" fill-opacity="0.3"/><rect x="1482.9" y="106.68" width="0.9" height="1.15" fill="#d4d4d4" fill-opacity="0.3"/><rect x="1483.9" y="106.68" width="0.9" height="1.15" fill="#d4d4d4" fill-opacity="0.25"/><rect x="1486.6" y="108.53" width="7.4" height="1.15" fill="#9cdcfe" fill-opacity="0.42"/><rect x="1494.1" y="108.53" width="0.9" height="1.15" fill="#d4d4d4" fill-opacity="0.25"/><rect x="1495.9" y="108.53" width="0.9" height="1.15" fill="#d4d4d4" fill-opacity="0.3"/><rect x="1490.4" y="110.38" width="10.2" height="1.15" fill="#9cdcfe" fill-opacity="0.42"/><rect x="1500.6" y="110.38" width="0.9" height="1.15" fill="#d4d4d4" fill-opacity="0.25"/><rect x="1502.5" y="110.38" width="0.9" height="1.15" fill="#d4d4d4" fill-opacity="0.3"/><rect x="1494.1" y="112.24" width="21.4" height="1.15" fill="#9cdcfe" fill-opacity="0.42"/><rect x="1515.5" y="112.24" width="0.9" height="1.15" fill="#d4d4d4" fill-opacity="0.25"/><rect x="1517.3" y="112.24" width="0.9" height="1.15" fill="#d4d4d4" fill-opacity="0.3"/><rect x="1497.8" y="114.09" width="8.4" height="1.15" fill="#9cdcfe" fill-opacity="0.42"/><rect x="1506.2" y="114.09" width="0.9" height="1.15" fill="#d4d4d4" fill-opacity="0.25"/><rect x="1508.0" y="114.09" width="0.9" height="1.15" fill="#d4d4d4" fill-opacity="0.3"/><rect x="1501.5" y="115.94" width="4.7" height="1.15" fill="#9cdcfe" fill-opacity="0.42"/><rect x="1506.2" y="115.94" width="0.9" height="1.15" fill="#d4d4d4" fill-opacity="0.25"/><rect x="1508.0" y="115.94" width="0.9" height="1.15" fill="#d4d4d4" fill-opacity="0.3"/><rect x="1505.2" y="117.79" width="0.9" height="1.15" fill="#d4d4d4" fill-opacity="0.3"/><rect x="1509.0" y="119.64" width="7.4" height="1.15" fill="#9cdcfe" fill-opacity="0.42"/><rect x="1516.4" y="119.64" width="0.9" height="1.15" fill="#d4d4d4" fill-opacity="0.25"/><rect x="1518.3" y="119.64" width="0.9" height="1.15" fill="#d4d4d4" fill-opacity="0.3"/><rect x="1519.2" y="119.64" width="0.9" height="1.15" fill="#d4d4d4" fill-opacity="0.3"/><rect x="1520.1" y="119.64" width="0.9" height="1.15" fill="#d4d4d4" fill-opacity="0.25"/><rect x="1509.0" y="121.50" width="5.6" height="1.15" fill="#9cdcfe" fill-opacity="0.42"/><rect x="1514.5" y="121.50" width="0.9" height="1.15" fill="#d4d4d4" fill-opacity="0.25"/><rect x="1516.4" y="121.50" width="9.3" height="1.15" fill="#ce9178" fill-opacity="0.42"/><rect x="1525.7" y="121.50" width="0.9" height="1.15" fill="#d4d4d4" fill-opacity="0.25"/><rect x="1509.0" y="123.35" width="8.4" height="1.15" fill="#9cdcfe" fill-opacity="0.42"/><rect x="1517.3" y="123.35" width="0.9" height="1.15" fill="#d4d4d4" fill-opacity="0.25"/><rect x="1519.2" y="123.35" width="0.9" height="1.15" fill="#d4d4d4" fill-opacity="0.3"/><rect x="1512.7" y="125.20" width="0.9" height="1.15" fill="#d4d4d4" fill-opacity="0.3"/><rect x="1516.4" y="127.05" width="13.0" height="1.15" fill="#9cdcfe" fill-opacity="0.42"/><rect x="1529.4" y="127.05" width="0.9" height="1.15" fill="#d4d4d4" fill-opacity="0.25"/><rect x="1531.3" y="127.05" width="8.4" height="1.15" fill="#ce9178" fill-opacity="0.42"/><rect x="1539.7" y="127.05" width="0.9" height="1.15" fill="#d4d4d4" fill-opacity="0.25"/><rect x="1516.4" y="128.90" width="5.6" height="1.15" fill="#9cdcfe" fill-opacity="0.42"/><rect x="1522.0" y="128.90" width="0.9" height="1.15" fill="#d4d4d4" fill-opacity="0.25"/><rect x="1523.8" y="128.90" width="1.9" height="1.15" fill="#ce9178" fill-opacity="0.42"/><rect x="1525.7" y="128.90" width="0.9" height="1.15" fill="#d4d4d4" fill-opacity="0.25"/><rect x="1516.4" y="130.76" width="5.6" height="1.15" fill="#9cdcfe" fill-opacity="0.42"/><rect x="1522.0" y="130.76" width="0.9" height="1.15" fill="#d4d4d4" fill-opacity="0.25"/><rect x="1523.8" y="130.76" width="8.4" height="1.15" fill="#ce9178" fill-opacity="0.42"/><rect x="1512.7" y="132.61" width="0.9" height="1.15" fill="#d4d4d4" fill-opacity="0.3"/><rect x="1509.0" y="134.46" width="0.9" height="1.15" fill="#d4d4d4" fill-opacity="0.3"/><rect x="1509.9" y="134.46" width="0.9" height="1.15" fill="#d4d4d4" fill-opacity="0.25"/><rect x="1509.0" y="136.31" width="15.8" height="1.15" fill="#9cdcfe" fill-opacity="0.42"/><rect x="1524.8" y="136.31" width="0.9" height="1.15" fill="#d4d4d4" fill-opacity="0.25"/><rect x="1526.6" y="136.31" width="5.6" height="1.15" fill="#ce9178" fill-opacity="0.42"/><rect x="1532.2" y="136.31" width="0.9" height="1.15" fill="#d4d4d4" fill-opacity="0.25"/><rect x="1509.0" y="138.16" width="5.6" height="1.15" fill="#9cdcfe" fill-opacity="0.42"/><rect x="1514.5" y="138.16" width="0.9" height="1.15" fill="#d4d4d4" fill-opacity="0.25"/><rect x="1516.4" y="138.16" width="9.3" height="1.15" fill="#ce9178" fill-opacity="0.42"/><rect x="1505.2" y="140.02" width="0.9" height="1.15" fill="#d4d4d4" fill-opacity="0.3"/><rect x="1506.2" y="140.02" width="0.9" height="1.15" fill="#d4d4d4" fill-opacity="0.25"/><rect x="1505.2" y="141.87" width="0.9" height="1.15" fill="#d4d4d4" fill-opacity="0.3"/><rect x="1509.0" y="143.72" width="7.4" height="1.15" fill="#9cdcfe" fill-opacity="0.42"/><rect x="1516.4" y="143.72" width="0.9" height="1.15" fill="#d4d4d4" fill-opacity="0.25"/><rect x="1518.3" y="143.72" width="0.9" height="1.15" fill="#d4d4d4" fill-opacity="0.3"/><rect x="1512.7" y="145.57" width="0.9" height="1.15" fill="#d4d4d4" fill-opacity="0.3"/><rect x="1516.4" y="147.42" width="13.0" height="1.15" fill="#9cdcfe" fill-opacity="0.42"/><rect x="1529.4" y="147.42" width="0.9" height="1.15" fill="#d4d4d4" fill-opacity="0.25"/><rect x="1531.3" y="147.42" width="8.4" height="1.15" fill="#ce9178" fill-opacity="0.42"/><rect x="1539.7" y="147.42" width="0.9" height="1.15" fill="#d4d4d4" fill-opacity="0.25"/><rect x="1516.4" y="149.28" width="5.6" height="1.15" fill="#9cdcfe" fill-opacity="0.42"/><rect x="1522.0" y="149.28" width="0.9" height="1.15" fill="#d4d4d4" fill-opacity="0.25"/><rect x="1523.8" y="149.28" width="4.7" height="1.15" fill="#ce9178" fill-opacity="0.42"/><rect x="1528.5" y="149.28" width="0.9" height="1.15" fill="#d4d4d4" fill-opacity="0.25"/><rect x="1516.4" y="151.13" width="5.6" height="1.15" fill="#9cdcfe" fill-opacity="0.42"/><rect x="1522.0" y="151.13" width="0.9" height="1.15" fill="#d4d4d4" fill-opacity="0.25"/><rect x="1523.8" y="151.13" width="8.4" height="1.15" fill="#ce9178" fill-opacity="0.42"/><rect x="1512.7" y="152.98" width="0.9" height="1.15" fill="#d4d4d4" fill-opacity="0.3"/><rect x="1509.0" y="154.83" width="0.9" height="1.15" fill="#d4d4d4" fill-opacity="0.3"/><rect x="1509.9" y="154.83" width="0.9" height="1.15" fill="#d4d4d4" fill-opacity="0.25"/><rect x="1509.0" y="156.68" width="5.6" height="1.15" fill="#9cdcfe" fill-opacity="0.42"/><rect x="1514.5" y="156.68" width="0.9" height="1.15" fill="#d4d4d4" fill-opacity="0.25"/><rect x="1516.4" y="156.68" width="6.5" height="1.15" fill="#ce9178" fill-opacity="0.42"/><rect x="1522.9" y="156.68" width="0.9" height="1.15" fill="#d4d4d4" fill-opacity="0.25"/><rect x="1509.0" y="158.54" width="8.4" height="1.15" fill="#9cdcfe" fill-opacity="0.42"/><rect x="1517.3" y="158.54" width="0.9" height="1.15" fill="#d4d4d4" fill-opacity="0.25"/><rect x="1519.2" y="158.54" width="0.9" height="1.15" fill="#d4d4d4" fill-opacity="0.3"/><rect x="1520.1" y="158.54" width="0.9" height="1.15" fill="#d4d4d4" fill-opacity="0.3"/><rect x="1521.0" y="158.54" width="0.9" height="1.15" fill="#d4d4d4" fill-opacity="0.25"/><rect x="1509.0" y="160.39" width="15.8" height="1.15" fill="#9cdcfe" fill-opacity="0.42"/><rect x="1524.8" y="160.39" width="0.9" height="1.15" fill="#d4d4d4" fill-opacity="0.25"/><rect x="1526.6" y="160.39" width="11.2" height="1.15" fill="#ce9178" fill-opacity="0.42"/><rect x="1537.8" y="160.39" width="0.9" height="1.15" fill="#d4d4d4" fill-opacity="0.25"/><rect x="1509.0" y="162.24" width="5.6" height="1.15" fill="#9cdcfe" fill-opacity="0.42"/><rect x="1514.5" y="162.24" width="0.9" height="1.15" fill="#d4d4d4" fill-opacity="0.25"/><rect x="1516.4" y="162.24" width="9.3" height="1.15" fill="#ce9178" fill-opacity="0.42"/><rect x="1505.2" y="164.09" width="0.9" height="1.15" fill="#d4d4d4" fill-opacity="0.3"/><rect x="1501.5" y="165.94" width="0.9" height="1.15" fill="#d4d4d4" fill-opacity="0.3"/><rect x="1502.5" y="165.94" width="0.9" height="1.15" fill="#d4d4d4" fill-opacity="0.25"/><rect x="1501.5" y="167.80" width="7.4" height="1.15" fill="#9cdcfe" fill-opacity="0.42"/><rect x="1509.0" y="167.80" width="0.9" height="1.15" fill="#d4d4d4" fill-opacity="0.25"/><rect x="1510.8" y="167.80" width="0.9" height="1.15" fill="#d4d4d4" fill-opacity="0.3"/><rect x="1505.2" y="169.65" width="8.4" height="1.15" fill="#9cdcfe" fill-opacity="0.42"/><rect x="1513.6" y="169.65" width="0.9" height="1.15" fill="#d4d4d4" fill-opacity="0.25"/><rect x="1515.5" y="169.65" width="35.3" height="1.15" fill="#ce9178" fill-opacity="0.42"/><rect x="1550.8" y="169.65" width="0.9" height="1.15" fill="#d4d4d4" fill-opacity="0.25"/><rect x="1505.2" y="171.50" width="5.6" height="1.15" fill="#9cdcfe" fill-opacity="0.42"/><rect x="1510.8" y="171.50" width="0.9" height="1.15" fill="#d4d4d4" fill-opacity="0.25"/><rect x="1512.7" y="171.50" width="4.7" height="1.15" fill="#ce9178" fill-opacity="0.42"/><rect x="1517.3" y="171.50" width="0.9" height="1.15" fill="#d4d4d4" fill-opacity="0.25"/><rect x="1505.2" y="173.35" width="8.4" height="1.15" fill="#9cdcfe" fill-opacity="0.42"/><rect x="1513.6" y="173.35" width="0.9" height="1.15" fill="#d4d4d4" fill-opacity="0.25"/><rect x="1515.5" y="173.35" width="0.9" height="1.15" fill="#d4d4d4" fill-opacity="0.3"/><rect x="1509.0" y="175.20" width="11.2" height="1.15" fill="#9cdcfe" fill-opacity="0.42"/><rect x="1520.1" y="175.20" width="0.9" height="1.15" fill="#d4d4d4" fill-opacity="0.25"/><rect x="1522.0" y="175.20" width="0.9" height="1.15" fill="#d4d4d4" fill-opacity="0.3"/><rect x="1512.7" y="177.06" width="8.4" height="1.15" fill="#9cdcfe" fill-opacity="0.42"/><rect x="1521.0" y="177.06" width="0.9" height="1.15" fill="#d4d4d4" fill-opacity="0.25"/><rect x="1522.9" y="177.06" width="14.0" height="1.15" fill="#ce9178" fill-opacity="0.42"/><rect x="1536.9" y="177.06" width="0.9" height="1.15" fill="#d4d4d4" fill-opacity="0.25"/><rect x="1512.7" y="178.91" width="8.4" height="1.15" fill="#9cdcfe" fill-opacity="0.42"/><rect x="1521.0" y="178.91" width="0.9" height="1.15" fill="#d4d4d4" fill-opacity="0.25"/><rect x="1522.9" y="178.91" width="0.9" height="1.15" fill="#d4d4d4" fill-opacity="0.3"/><rect x="1516.4" y="180.76" width="3.7" height="1.15" fill="#9cdcfe" fill-opacity="0.42"/><rect x="1520.1" y="180.76" width="0.9" height="1.15" fill="#d4d4d4" fill-opacity="0.25"/><rect x="1522.0" y="180.76" width="17.7" height="1.15" fill="#ce9178" fill-opacity="0.42"/><rect x="1512.7" y="182.61" width="0.9" height="1.15" fill="#d4d4d4" fill-opacity="0.3"/><rect x="1509.0" y="184.46" width="0.9" height="1.15" fill="#d4d4d4" fill-opacity="0.3"/><rect x="1509.9" y="184.46" width="0.9" height="1.15" fill="#d4d4d4" fill-opacity="0.25"/><rect x="1509.0" y="186.32" width="14.9" height="1.15" fill="#9cdcfe" fill-opacity="0.42"/><rect x="1523.8" y="186.32" width="0.9" height="1.15" fill="#d4d4d4" fill-opacity="0.25"/><rect x="1525.7" y="186.32" width="0.9" height="1.15" fill="#d4d4d4" fill-opacity="0.3"/><rect x="1512.7" y="188.17" width="8.4" height="1.15" fill="#9cdcfe" fill-opacity="0.42"/><rect x="1521.0" y="188.17" width="0.9" height="1.15" fill="#d4d4d4" fill-opacity="0.25"/><rect x="1522.9" y="188.17" width="23.2" height="1.15" fill="#ce9178" fill-opacity="0.42"/><rect x="1546.2" y="188.17" width="0.9" height="1.15" fill="#d4d4d4" fill-opacity="0.25"/><rect x="1512.7" y="190.02" width="7.4" height="1.15" fill="#9cdcfe" fill-opacity="0.42"/><rect x="1520.1" y="190.02" width="0.9" height="1.15" fill="#d4d4d4" fill-opacity="0.25"/><rect x="1522.0" y="190.02" width="0.9" height="1.15" fill="#d4d4d4" fill-opacity="0.3"/><rect x="1516.4" y="191.87" width="4.7" height="1.15" fill="#9cdcfe" fill-opacity="0.42"/><rect x="1521.0" y="191.87" width="0.9" height="1.15" fill="#d4d4d4" fill-opacity="0.25"/><rect x="1522.9" y="191.87" width="14.9" height="1.15" fill="#ce9178" fill-opacity="0.42"/><rect x="1512.7" y="193.72" width="0.9" height="1.15" fill="#d4d4d4" fill-opacity="0.3"/><rect x="1509.0" y="195.58" width="0.9" height="1.15" fill="#d4d4d4" fill-opacity="0.3"/><rect x="1505.2" y="197.43" width="0.9" height="1.15" fill="#d4d4d4" fill-opacity="0.3"/><rect x="1506.2" y="197.43" width="0.9" height="1.15" fill="#d4d4d4" fill-opacity="0.25"/><rect x="1505.2" y="199.28" width="6.5" height="1.15" fill="#9cdcfe" fill-opacity="0.42"/><rect x="1511.8" y="199.28" width="0.9" height="1.15" fill="#d4d4d4" fill-opacity="0.25"/><rect x="1513.6" y="199.28" width="8.4" height="1.15" fill="#ce9178" fill-opacity="0.42"/><rect x="1522.0" y="199.28" width="0.9" height="1.15" fill="#d4d4d4" fill-opacity="0.25"/><rect x="1505.2" y="201.13" width="8.4" height="1.15" fill="#9cdcfe" fill-opacity="0.42"/><rect x="1513.6" y="201.13" width="0.9" height="1.15" fill="#d4d4d4" fill-opacity="0.25"/><rect x="1515.5" y="201.13" width="0.9" height="1.15" fill="#b5cea8" fill-opacity="0.42"/><rect x="1501.5" y="202.98" width="0.9" height="1.15" fill="#d4d4d4" fill-opacity="0.3"/><rect x="1502.5" y="202.98" width="0.9" height="1.15" fill="#d4d4d4" fill-opacity="0.25"/><rect x="1501.5" y="204.84" width="4.7" height="1.15" fill="#9cdcfe" fill-opacity="0.42"/><rect x="1506.2" y="204.84" width="0.9" height="1.15" fill="#d4d4d4" fill-opacity="0.25"/><rect x="1508.0" y="204.84" width="0.9" height="1.15" fill="#d4d4d4" fill-opacity="0.3"/><rect x="1505.2" y="206.69" width="9.3" height="1.15" fill="#9cdcfe" fill-opacity="0.42"/><rect x="1514.5" y="206.69" width="0.9" height="1.15" fill="#d4d4d4" fill-opacity="0.25"/><rect x="1516.4" y="206.69" width="71.6" height="1.15" fill="#ce9178" fill-opacity="0.42"/><rect x="1505.2" y="208.54" width="9.3" height="1.15" fill="#9cdcfe" fill-opacity="0.42"/><rect x="1514.5" y="208.54" width="0.9" height="1.15" fill="#d4d4d4" fill-opacity="0.25"/><rect x="1516.4" y="208.54" width="0.9" height="1.15" fill="#d4d4d4" fill-opacity="0.3"/><rect x="1509.0" y="210.39" width="17.7" height="1.15" fill="#9cdcfe" fill-opacity="0.42"/><rect x="1526.6" y="210.39" width="0.9" height="1.15" fill="#d4d4d4" fill-opacity="0.25"/><rect x="1528.5" y="210.39" width="0.9" height="1.15" fill="#d4d4d4" fill-opacity="0.3"/><rect x="1529.4" y="210.39" width="0.9" height="1.15" fill="#d4d4d4" fill-opacity="0.3"/><rect x="1530.4" y="210.39" width="0.9" height="1.15" fill="#d4d4d4" fill-opacity="0.25"/><rect x="1509.0" y="212.24" width="16.7" height="1.15" fill="#9cdcfe" fill-opacity="0.42"/><rect x="1525.7" y="212.24" width="0.9" height="1.15" fill="#d4d4d4" fill-opacity="0.25"/><rect x="1527.6" y="212.24" width="0.9" height="1.15" fill="#d4d4d4" fill-opacity="0.3"/><rect x="1528.5" y="212.24" width="0.9" height="1.15" fill="#d4d4d4" fill-opacity="0.3"/><rect x="1529.4" y="212.24" width="0.9" height="1.15" fill="#d4d4d4" fill-opacity="0.25"/><rect x="1509.0" y="214.10" width="14.9" height="1.15" fill="#9cdcfe" fill-opacity="0.42"/><rect x="1523.8" y="214.10" width="0.9" height="1.15" fill="#d4d4d4" fill-opacity="0.25"/><rect x="1525.7" y="214.10" width="0.9" height="1.15" fill="#d4d4d4" fill-opacity="0.3"/><rect x="1526.6" y="214.10" width="0.9" height="1.15" fill="#d4d4d4" fill-opacity="0.3"/><rect x="1527.6" y="214.10" width="0.9" height="1.15" fill="#d4d4d4" fill-opacity="0.25"/><rect x="1509.0" y="215.95" width="7.4" height="1.15" fill="#9cdcfe" fill-opacity="0.42"/><rect x="1516.4" y="215.95" width="0.9" height="1.15" fill="#d4d4d4" fill-opacity="0.25"/><rect x="1518.3" y="215.95" width="69.7" height="1.15" fill="#ce9178" fill-opacity="0.42"/><rect x="1509.0" y="217.80" width="8.4" height="1.15" fill="#9cdcfe" fill-opacity="0.42"/><rect x="1517.3" y="217.80" width="0.9" height="1.15" fill="#d4d4d4" fill-opacity="0.25"/><rect x="1519.2" y="217.80" width="68.8" height="1.15" fill="#ce9178" fill-opacity="0.42"/><rect x="1509.0" y="219.65" width="10.2" height="1.15" fill="#9cdcfe" fill-opacity="0.42"/><rect x="1519.2" y="219.65" width="0.9" height="1.15" fill="#d4d4d4" fill-opacity="0.25"/><rect x="1521.0" y="219.65" width="31.6" height="1.15" fill="#ce9178" fill-opacity="0.42"/><rect x="1505.2" y="221.50" width="0.9" height="1.15" fill="#d4d4d4" fill-opacity="0.3"/><rect x="1506.2" y="221.50" width="0.9" height="1.15" fill="#d4d4d4" fill-opacity="0.25"/><rect x="1505.2" y="223.36" width="16.7" height="1.15" fill="#9cdcfe" fill-opacity="0.42"/><rect x="1522.0" y="223.36" width="0.9" height="1.15" fill="#d4d4d4" fill-opacity="0.25"/><rect x="1523.8" y="223.36" width="0.9" height="1.15" fill="#d4d4d4" fill-opacity="0.3"/><rect x="1509.0" y="225.21" width="17.7" height="1.15" fill="#9cdcfe" fill-opacity="0.42"/><rect x="1526.6" y="225.21" width="0.9" height="1.15" fill="#d4d4d4" fill-opacity="0.25"/><rect x="1528.5" y="225.21" width="0.9" height="1.15" fill="#d4d4d4" fill-opacity="0.3"/><rect x="1512.7" y="227.06" width="13.0" height="1.15" fill="#9cdcfe" fill-opacity="0.42"/><rect x="1525.7" y="227.06" width="0.9" height="1.15" fill="#d4d4d4" fill-opacity="0.25"/><rect x="1527.6" y="227.06" width="0.9" height="1.15" fill="#d4d4d4" fill-opacity="0.3"/><rect x="1516.4" y="228.91" width="11.2" height="1.15" fill="#9cdcfe" fill-opacity="0.42"/><rect x="1527.6" y="228.91" width="0.9" height="1.15" fill="#d4d4d4" fill-opacity="0.25"/><rect x="1529.4" y="228.91" width="2.8" height="1.15" fill="#b5cea8" fill-opacity="0.42"/><rect x="1532.2" y="228.91" width="0.9" height="1.15" fill="#d4d4d4" fill-opacity="0.25"/><rect x="1516.4" y="230.76" width="3.7" height="1.15" fill="#9cdcfe" fill-opacity="0.42"/><rect x="1520.1" y="230.76" width="0.9" height="1.15" fill="#d4d4d4" fill-opacity="0.25"/><rect x="1522.0" y="230.76" width="1.9" height="1.15" fill="#b5cea8" fill-opacity="0.42"/><rect x="1523.8" y="230.76" width="0.9" height="1.15" fill="#d4d4d4" fill-opacity="0.25"/><rect x="1516.4" y="232.62" width="14.9" height="1.15" fill="#9cdcfe" fill-opacity="0.42"/><rect x="1531.3" y="232.62" width="0.9" height="1.15" fill="#d4d4d4" fill-opacity="0.25"/><rect x="1533.1" y="232.62" width="0.9" height="1.15" fill="#b5cea8" fill-opacity="0.42"/><rect x="1534.1" y="232.62" width="0.9" height="1.15" fill="#d4d4d4" fill-opacity="0.25"/><rect x="1516.4" y="234.47" width="12.1" height="1.15" fill="#9cdcfe" fill-opacity="0.42"/><rect x="1528.5" y="234.47" width="0.9" height="1.15" fill="#d4d4d4" fill-opacity="0.25"/><rect x="1530.4" y="234.47" width="0.9" height="1.15" fill="#b5cea8" fill-opacity="0.42"/><rect x="1512.7" y="236.32" width="0.9" height="1.15" fill="#d4d4d4" fill-opacity="0.3"/><rect x="1513.6" y="236.32" width="0.9" height="1.15" fill="#d4d4d4" fill-opacity="0.25"/><rect x="1512.7" y="238.17" width="10.2" height="1.15" fill="#9cdcfe" fill-opacity="0.42"/><rect x="1522.9" y="238.17" width="0.9" height="1.15" fill="#d4d4d4" fill-opacity="0.25"/><rect x="1524.8" y="238.17" width="0.9" height="1.15" fill="#d4d4d4" fill-opacity="0.3"/><rect x="1516.4" y="240.02" width="11.2" height="1.15" fill="#9cdcfe" fill-opacity="0.42"/><rect x="1527.6" y="240.02" width="0.9" height="1.15" fill="#d4d4d4" fill-opacity="0.25"/><rect x="1529.4" y="240.02" width="2.8" height="1.15" fill="#b5cea8" fill-opacity="0.42"/><rect x="1532.2" y="240.02" width="0.9" height="1.15" fill="#d4d4d4" fill-opacity="0.25"/><rect x="1516.4" y="241.88" width="3.7" height="1.15" fill="#9cdcfe" fill-opacity="0.42"/><rect x="1520.1" y="241.88" width="0.9" height="1.15" fill="#d4d4d4" fill-opacity="0.25"/><rect x="1522.0" y="241.88" width="1.9" height="1.15" fill="#b5cea8" fill-opacity="0.42"/><rect x="1523.8" y="241.88" width="0.9" height="1.15" fill="#d4d4d4" fill-opacity="0.25"/><rect x="1516.4" y="243.73" width="14.9" height="1.15" fill="#9cdcfe" fill-opacity="0.42"/><rect x="1531.3" y="243.73" width="0.9" height="1.15" fill="#d4d4d4" fill-opacity="0.25"/><rect x="1533.1" y="243.73" width="0.9" height="1.15" fill="#b5cea8" fill-opacity="0.42"/><rect x="1534.1" y="243.73" width="0.9" height="1.15" fill="#d4d4d4" fill-opacity="0.25"/><rect x="1516.4" y="245.58" width="12.1" height="1.15" fill="#9cdcfe" fill-opacity="0.42"/><rect x="1528.5" y="245.58" width="0.9" height="1.15" fill="#d4d4d4" fill-opacity="0.25"/><rect x="1530.4" y="245.58" width="0.9" height="1.15" fill="#b5cea8" fill-opacity="0.42"/><rect x="1512.7" y="247.43" width="0.9" height="1.15" fill="#d4d4d4" fill-opacity="0.3"/><rect x="1513.6" y="247.43" width="0.9" height="1.15" fill="#d4d4d4" fill-opacity="0.25"/><rect x="1512.7" y="249.28" width="20.5" height="1.15" fill="#9cdcfe" fill-opacity="0.42"/><rect x="1533.1" y="249.28" width="0.9" height="1.15" fill="#d4d4d4" fill-opacity="0.25"/><rect x="1535.0" y="249.28" width="0.9" height="1.15" fill="#d4d4d4" fill-opacity="0.3"/><rect x="1516.4" y="251.14" width="11.2" height="1.15" fill="#9cdcfe" fill-opacity="0.42"/><rect x="1527.6" y="251.14" width="0.9" height="1.15" fill="#d4d4d4" fill-opacity="0.25"/><rect x="1529.4" y="251.14" width="2.8" height="1.15" fill="#b5cea8" fill-opacity="0.42"/><rect x="1532.2" y="251.14" width="0.9" height="1.15" fill="#d4d4d4" fill-opacity="0.25"/><rect x="1516.4" y="252.99" width="3.7" height="1.15" fill="#9cdcfe" fill-opacity="0.42"/><rect x="1520.1" y="252.99" width="0.9" height="1.15" fill="#d4d4d4" fill-opacity="0.25"/><rect x="1522.0" y="252.99" width="3.7" height="1.15" fill="#ce9178" fill-opacity="0.42"/><rect x="1525.7" y="252.99" width="0.9" height="1.15" fill="#d4d4d4" fill-opacity="0.25"/><rect x="1516.4" y="254.84" width="14.9" height="1.15" fill="#9cdcfe" fill-opacity="0.42"/><rect x="1531.3" y="254.84" width="0.9" height="1.15" fill="#d4d4d4" fill-opacity="0.25"/><rect x="1533.1" y="254.84" width="0.9" height="1.15" fill="#b5cea8" fill-opacity="0.42"/><rect x="1534.1" y="254.84" width="0.9" height="1.15" fill="#d4d4d4" fill-opacity="0.25"/><rect x="1516.4" y="256.69" width="12.1" height="1.15" fill="#9cdcfe" fill-opacity="0.42"/><rect x="1528.5" y="256.69" width="0.9" height="1.15" fill="#d4d4d4" fill-opacity="0.25"/><rect x="1530.4" y="256.69" width="0.9" height="1.15" fill="#b5cea8" fill-opacity="0.42"/><rect x="1512.7" y="258.54" width="0.9" height="1.15" fill="#d4d4d4" fill-opacity="0.3"/><rect x="1513.6" y="258.54" width="0.9" height="1.15" fill="#d4d4d4" fill-opacity="0.25"/><rect x="1512.7" y="260.40" width="26.0" height="1.15" fill="#9cdcfe" fill-opacity="0.42"/><rect x="1538.7" y="260.40" width="0.9" height="1.15" fill="#d4d4d4" fill-opacity="0.25"/><rect x="1540.6" y="260.40" width="0.9" height="1.15" fill="#d4d4d4" fill-opacity="0.3"/><rect x="1516.4" y="262.25" width="11.2" height="1.15" fill="#9cdcfe" fill-opacity="0.42"/><rect x="1527.6" y="262.25" width="0.9" height="1.15" fill="#d4d4d4" fill-opacity="0.25"/><rect x="1529.4" y="262.25" width="2.8" height="1.15" fill="#b5cea8" fill-opacity="0.42"/><rect x="1532.2" y="262.25" width="0.9" height="1.15" fill="#d4d4d4" fill-opacity="0.25"/><rect x="1516.4" y="264.10" width="3.7" height="1.15" fill="#9cdcfe" fill-opacity="0.42"/><rect x="1520.1" y="264.10" width="0.9" height="1.15" fill="#d4d4d4" fill-opacity="0.25"/><rect x="1522.0" y="264.10" width="3.7" height="1.15" fill="#ce9178" fill-opacity="0.42"/><rect x="1525.7" y="264.10" width="0.9" height="1.15" fill="#d4d4d4" fill-opacity="0.25"/><rect x="1516.4" y="265.95" width="14.9" height="1.15" fill="#9cdcfe" fill-opacity="0.42"/><rect x="1531.3" y="265.95" width="0.9" height="1.15" fill="#d4d4d4" fill-opacity="0.25"/><rect x="1533.1" y="265.95" width="0.9" height="1.15" fill="#b5cea8" fill-opacity="0.42"/><rect x="1534.1" y="265.95" width="0.9" height="1.15" fill="#d4d4d4" fill-opacity="0.25"/><rect x="1516.4" y="267.80" width="12.1" height="1.15" fill="#9cdcfe" fill-opacity="0.42"/><rect x="1528.5" y="267.80" width="0.9" height="1.15" fill="#d4d4d4" fill-opacity="0.25"/><rect x="1530.4" y="267.80" width="0.9" height="1.15" fill="#b5cea8" fill-opacity="0.42"/><rect x="1512.7" y="269.66" width="0.9" height="1.15" fill="#d4d4d4" fill-opacity="0.3"/><rect x="1513.6" y="269.66" width="0.9" height="1.15" fill="#d4d4d4" fill-opacity="0.25"/><rect x="1512.7" y="271.51" width="41.9" height="1.15" fill="#9cdcfe" fill-opacity="0.42"/><rect x="1554.5" y="271.51" width="0.9" height="1.15" fill="#d4d4d4" fill-opacity="0.25"/><rect x="1556.4" y="271.51" width="0.9" height="1.15" fill="#d4d4d4" fill-opacity="0.3"/><rect x="1516.4" y="273.36" width="11.2" height="1.15" fill="#9cdcfe" fill-opacity="0.42"/><rect x="1527.6" y="273.36" width="0.9" height="1.15" fill="#d4d4d4" fill-opacity="0.25"/><rect x="1529.4" y="273.36" width="2.8" height="1.15" fill="#b5cea8" fill-opacity="0.42"/><rect x="1532.2" y="273.36" width="0.9" height="1.15" fill="#d4d4d4" fill-opacity="0.25"/><rect x="1516.4" y="275.21" width="3.7" height="1.15" fill="#9cdcfe" fill-opacity="0.42"/><rect x="1520.1" y="275.21" width="0.9" height="1.15" fill="#d4d4d4" fill-opacity="0.25"/><rect x="1522.0" y="275.21" width="3.7" height="1.15" fill="#ce9178" fill-opacity="0.42"/><rect x="1525.7" y="275.21" width="0.9" height="1.15" fill="#d4d4d4" fill-opacity="0.25"/><rect x="1516.4" y="277.06" width="14.9" height="1.15" fill="#9cdcfe" fill-opacity="0.42"/><rect x="1531.3" y="277.06" width="0.9" height="1.15" fill="#d4d4d4" fill-opacity="0.25"/><rect x="1533.1" y="277.06" width="0.9" height="1.15" fill="#b5cea8" fill-opacity="0.42"/><rect x="1534.1" y="277.06" width="0.9" height="1.15" fill="#d4d4d4" fill-opacity="0.25"/><rect x="1516.4" y="278.92" width="12.1" height="1.15" fill="#9cdcfe" fill-opacity="0.42"/><rect x="1528.5" y="278.92" width="0.9" height="1.15" fill="#d4d4d4" fill-opacity="0.25"/><rect x="1530.4" y="278.92" width="0.9" height="1.15" fill="#b5cea8" fill-opacity="0.42"/><rect x="1512.7" y="280.77" width="0.9" height="1.15" fill="#d4d4d4" fill-opacity="0.3"/><rect x="1513.6" y="280.77" width="0.9" height="1.15" fill="#d4d4d4" fill-opacity="0.25"/><rect x="1512.7" y="282.62" width="57.7" height="1.15" fill="#9cdcfe" fill-opacity="0.42"/><rect x="1570.3" y="282.62" width="0.9" height="1.15" fill="#d4d4d4" fill-opacity="0.25"/><rect x="1572.2" y="282.62" width="0.9" height="1.15" fill="#d4d4d4" fill-opacity="0.3"/><rect x="1516.4" y="284.47" width="11.2" height="1.15" fill="#9cdcfe" fill-opacity="0.42"/><rect x="1527.6" y="284.47" width="0.9" height="1.15" fill="#d4d4d4" fill-opacity="0.25"/><rect x="1529.4" y="284.47" width="2.8" height="1.15" fill="#b5cea8" fill-opacity="0.42"/><rect x="1532.2" y="284.47" width="0.9" height="1.15" fill="#d4d4d4" fill-opacity="0.25"/><rect x="1516.4" y="286.32" width="3.7" height="1.15" fill="#9cdcfe" fill-opacity="0.42"/><rect x="1520.1" y="286.32" width="0.9" height="1.15" fill="#d4d4d4" fill-opacity="0.25"/><rect x="1522.0" y="286.32" width="3.7" height="1.15" fill="#ce9178" fill-opacity="0.42"/><rect x="1525.7" y="286.32" width="0.9" height="1.15" fill="#d4d4d4" fill-opacity="0.25"/><rect x="1516.4" y="288.18" width="14.9" height="1.15" fill="#9cdcfe" fill-opacity="0.42"/><rect x="1531.3" y="288.18" width="0.9" height="1.15" fill="#d4d4d4" fill-opacity="0.25"/><rect x="1533.1" y="288.18" width="0.9" height="1.15" fill="#b5cea8" fill-opacity="0.42"/><rect x="1534.1" y="288.18" width="0.9" height="1.15" fill="#d4d4d4" fill-opacity="0.25"/><rect x="1516.4" y="290.03" width="12.1" height="1.15" fill="#9cdcfe" fill-opacity="0.42"/><rect x="1528.5" y="290.03" width="0.9" height="1.15" fill="#d4d4d4" fill-opacity="0.25"/><rect x="1530.4" y="290.03" width="0.9" height="1.15" fill="#b5cea8" fill-opacity="0.42"/><rect x="1512.7" y="291.88" width="0.9" height="1.15" fill="#d4d4d4" fill-opacity="0.3"/><rect x="1513.6" y="291.88" width="0.9" height="1.15" fill="#d4d4d4" fill-opacity="0.25"/><rect x="1512.7" y="293.73" width="18.6" height="1.15" fill="#9cdcfe" fill-opacity="0.42"/><rect x="1531.3" y="293.73" width="0.9" height="1.15" fill="#d4d4d4" fill-opacity="0.25"/><rect x="1533.1" y="293.73" width="0.9" height="1.15" fill="#d4d4d4" fill-opacity="0.3"/><rect x="1516.4" y="295.58" width="11.2" height="1.15" fill="#9cdcfe" fill-opacity="0.42"/><rect x="1527.6" y="295.58" width="0.9" height="1.15" fill="#d4d4d4" fill-opacity="0.25"/><rect x="1529.4" y="295.58" width="2.8" height="1.15" fill="#b5cea8" fill-opacity="0.42"/><rect x="1532.2" y="295.58" width="0.9" height="1.15" fill="#d4d4d4" fill-opacity="0.25"/><rect x="1516.4" y="297.44" width="3.7" height="1.15" fill="#9cdcfe" fill-opacity="0.42"/><rect x="1520.1" y="297.44" width="0.9" height="1.15" fill="#d4d4d4" fill-opacity="0.25"/><rect x="1522.0" y="297.44" width="1.9" height="1.15" fill="#b5cea8" fill-opacity="0.42"/><rect x="1523.8" y="297.44" width="0.9" height="1.15" fill="#d4d4d4" fill-opacity="0.25"/><rect x="1516.4" y="299.29" width="14.9" height="1.15" fill="#9cdcfe" fill-opacity="0.42"/><rect x="1531.3" y="299.29" width="0.9" height="1.15" fill="#d4d4d4" fill-opacity="0.25"/><rect x="1533.1" y="299.29" width="0.9" height="1.15" fill="#b5cea8" fill-opacity="0.42"/><rect x="1534.1" y="299.29" width="0.9" height="1.15" fill="#d4d4d4" fill-opacity="0.25"/><rect x="1516.4" y="301.14" width="12.1" height="1.15" fill="#9cdcfe" fill-opacity="0.42"/><rect x="1528.5" y="301.14" width="0.9" height="1.15" fill="#d4d4d4" fill-opacity="0.25"/><rect x="1530.4" y="301.14" width="0.9" height="1.15" fill="#b5cea8" fill-opacity="0.42"/><rect x="1512.7" y="302.99" width="0.9" height="1.15" fill="#d4d4d4" fill-opacity="0.3"/><rect x="1513.6" y="302.99" width="0.9" height="1.15" fill="#d4d4d4" fill-opacity="0.25"/><rect x="1512.7" y="304.84" width="17.7" height="1.15" fill="#9cdcfe" fill-opacity="0.42"/><rect x="1530.4" y="304.84" width="0.9" height="1.15" fill="#d4d4d4" fill-opacity="0.25"/><rect x="1532.2" y="304.84" width="0.9" height="1.15" fill="#d4d4d4" fill-opacity="0.3"/><rect x="1516.4" y="306.70" width="11.2" height="1.15" fill="#9cdcfe" fill-opacity="0.42"/><rect x="1527.6" y="306.70" width="0.9" height="1.15" fill="#d4d4d4" fill-opacity="0.25"/><rect x="1529.4" y="306.70" width="2.8" height="1.15" fill="#b5cea8" fill-opacity="0.42"/><rect x="1532.2" y="306.70" width="0.9" height="1.15" fill="#d4d4d4" fill-opacity="0.25"/><rect x="1516.4" y="308.55" width="3.7" height="1.15" fill="#9cdcfe" fill-opacity="0.42"/><rect x="1520.1" y="308.55" width="0.9" height="1.15" fill="#d4d4d4" fill-opacity="0.25"/><rect x="1522.0" y="308.55" width="3.7" height="1.15" fill="#ce9178" fill-opacity="0.42"/><rect x="1525.7" y="308.55" width="0.9" height="1.15" fill="#d4d4d4" fill-opacity="0.25"/><rect x="1516.4" y="310.40" width="14.9" height="1.15" fill="#9cdcfe" fill-opacity="0.42"/><rect x="1531.3" y="310.40" width="0.9" height="1.15" fill="#d4d4d4" fill-opacity="0.25"/><rect x="1533.1" y="310.40" width="0.9" height="1.15" fill="#b5cea8" fill-opacity="0.42"/><rect x="1534.1" y="310.40" width="0.9" height="1.15" fill="#d4d4d4" fill-opacity="0.25"/><rect x="1516.4" y="312.25" width="12.1" height="1.15" fill="#9cdcfe" fill-opacity="0.42"/><rect x="1528.5" y="312.25" width="0.9" height="1.15" fill="#d4d4d4" fill-opacity="0.25"/><rect x="1530.4" y="312.25" width="0.9" height="1.15" fill="#b5cea8" fill-opacity="0.42"/><rect x="1512.7" y="314.10" width="0.9" height="1.15" fill="#d4d4d4" fill-opacity="0.3"/><rect x="1513.6" y="314.10" width="0.9" height="1.15" fill="#d4d4d4" fill-opacity="0.25"/><rect x="1512.7" y="315.96" width="73.5" height="1.15" fill="#9cdcfe" fill-opacity="0.42"/><rect x="1586.2" y="315.96" width="0.9" height="1.15" fill="#d4d4d4" fill-opacity="0.25"/><rect x="1516.4" y="317.81" width="11.2" height="1.15" fill="#9cdcfe" fill-opacity="0.42"/><rect x="1527.6" y="317.81" width="0.9" height="1.15" fill="#d4d4d4" fill-opacity="0.25"/><rect x="1529.4" y="317.81" width="2.8" height="1.15" fill="#b5cea8" fill-opacity="0.42"/><rect x="1532.2" y="317.81" width="0.9" height="1.15" fill="#d4d4d4" fill-opacity="0.25"/><rect x="1516.4" y="319.66" width="3.7" height="1.15" fill="#9cdcfe" fill-opacity="0.42"/><rect x="1520.1" y="319.66" width="0.9" height="1.15" fill="#d4d4d4" fill-opacity="0.25"/><rect x="1522.0" y="319.66" width="1.9" height="1.15" fill="#b5cea8" fill-opacity="0.42"/><rect x="1523.8" y="319.66" width="0.9" height="1.15" fill="#d4d4d4" fill-opacity="0.25"/><rect x="1516.4" y="321.51" width="14.9" height="1.15" fill="#9cdcfe" fill-opacity="0.42"/><rect x="1531.3" y="321.51" width="0.9" height="1.15" fill="#d4d4d4" fill-opacity="0.25"/><rect x="1533.1" y="321.51" width="0.9" height="1.15" fill="#b5cea8" fill-opacity="0.42"/><rect x="1534.1" y="321.51" width="0.9" height="1.15" fill="#d4d4d4" fill-opacity="0.25"/><rect x="1516.4" y="323.36" width="12.1" height="1.15" fill="#9cdcfe" fill-opacity="0.42"/><rect x="1528.5" y="323.36" width="0.9" height="1.15" fill="#d4d4d4" fill-opacity="0.25"/><rect x="1530.4" y="323.36" width="0.9" height="1.15" fill="#b5cea8" fill-opacity="0.42"/><rect x="1512.7" y="325.22" width="0.9" height="1.15" fill="#d4d4d4" fill-opacity="0.3"/><rect x="1513.6" y="325.22" width="0.9" height="1.15" fill="#d4d4d4" fill-opacity="0.25"/><rect x="1512.7" y="327.07" width="73.5" height="1.15" fill="#9cdcfe" fill-opacity="0.42"/><rect x="1586.2" y="327.07" width="0.9" height="1.15" fill="#d4d4d4" fill-opacity="0.25"/><rect x="1516.4" y="328.92" width="11.2" height="1.15" fill="#9cdcfe" fill-opacity="0.42"/><rect x="1527.6" y="328.92" width="0.9" height="1.15" fill="#d4d4d4" fill-opacity="0.25"/><rect x="1529.4" y="328.92" width="2.8" height="1.15" fill="#b5cea8" fill-opacity="0.42"/><rect x="1532.2" y="328.92" width="0.9" height="1.15" fill="#d4d4d4" fill-opacity="0.25"/><rect x="1516.4" y="330.77" width="3.7" height="1.15" fill="#9cdcfe" fill-opacity="0.42"/><rect x="1520.1" y="330.77" width="0.9" height="1.15" fill="#d4d4d4" fill-opacity="0.25"/><rect x="1522.0" y="330.77" width="1.9" height="1.15" fill="#b5cea8" fill-opacity="0.42"/><rect x="1523.8" y="330.77" width="0.9" height="1.15" fill="#d4d4d4" fill-opacity="0.25"/><rect x="1516.4" y="332.62" width="14.9" height="1.15" fill="#9cdcfe" fill-opacity="0.42"/><rect x="1531.3" y="332.62" width="0.9" height="1.15" fill="#d4d4d4" fill-opacity="0.25"/><rect x="1533.1" y="332.62" width="0.9" height="1.15" fill="#b5cea8" fill-opacity="0.42"/><rect x="1534.1" y="332.62" width="0.9" height="1.15" fill="#d4d4d4" fill-opacity="0.25"/><rect x="1516.4" y="334.48" width="12.1" height="1.15" fill="#9cdcfe" fill-opacity="0.42"/><rect x="1528.5" y="334.48" width="0.9" height="1.15" fill="#d4d4d4" fill-opacity="0.25"/><rect x="1530.4" y="334.48" width="0.9" height="1.15" fill="#b5cea8" fill-opacity="0.42"/><rect x="1512.7" y="336.33" width="0.9" height="1.15" fill="#d4d4d4" fill-opacity="0.3"/><rect x="1513.6" y="336.33" width="0.9" height="1.15" fill="#d4d4d4" fill-opacity="0.25"/><rect x="1512.7" y="338.18" width="26.0" height="1.15" fill="#9cdcfe" fill-opacity="0.42"/><rect x="1538.7" y="338.18" width="0.9" height="1.15" fill="#d4d4d4" fill-opacity="0.25"/><rect x="1540.6" y="338.18" width="0.9" height="1.15" fill="#d4d4d4" fill-opacity="0.3"/><rect x="1516.4" y="340.03" width="11.2" height="1.15" fill="#9cdcfe" fill-opacity="0.42"/><rect x="1527.6" y="340.03" width="0.9" height="1.15" fill="#d4d4d4" fill-opacity="0.25"/><rect x="1529.4" y="340.03" width="2.8" height="1.15" fill="#b5cea8" fill-opacity="0.42"/><rect x="1532.2" y="340.03" width="0.9" height="1.15" fill="#d4d4d4" fill-opacity="0.25"/><rect x="1516.4" y="341.88" width="3.7" height="1.15" fill="#9cdcfe" fill-opacity="0.42"/><rect x="1520.1" y="341.88" width="0.9" height="1.15" fill="#d4d4d4" fill-opacity="0.25"/><rect x="1522.0" y="341.88" width="3.7" height="1.15" fill="#ce9178" fill-opacity="0.42"/><rect x="1525.7" y="341.88" width="0.9" height="1.15" fill="#d4d4d4" fill-opacity="0.25"/><rect x="1516.4" y="343.74" width="14.9" height="1.15" fill="#9cdcfe" fill-opacity="0.42"/><rect x="1531.3" y="343.74" width="0.9" height="1.15" fill="#d4d4d4" fill-opacity="0.25"/><rect x="1533.1" y="343.74" width="0.9" height="1.15" fill="#b5cea8" fill-opacity="0.42"/><rect x="1534.1" y="343.74" width="0.9" height="1.15" fill="#d4d4d4" fill-opacity="0.25"/><rect x="1516.4" y="345.59" width="12.1" height="1.15" fill="#9cdcfe" fill-opacity="0.42"/><rect x="1528.5" y="345.59" width="0.9" height="1.15" fill="#d4d4d4" fill-opacity="0.25"/><rect x="1530.4" y="345.59" width="0.9" height="1.15" fill="#b5cea8" fill-opacity="0.42"/><rect x="1512.7" y="347.44" width="0.9" height="1.15" fill="#d4d4d4" fill-opacity="0.3"/><rect x="1509.0" y="349.29" width="0.9" height="1.15" fill="#d4d4d4" fill-opacity="0.3"/><rect x="1509.9" y="349.29" width="0.9" height="1.15" fill="#d4d4d4" fill-opacity="0.25"/><rect x="1509.0" y="351.14" width="16.7" height="1.15" fill="#9cdcfe" fill-opacity="0.42"/><rect x="1525.7" y="351.14" width="0.9" height="1.15" fill="#d4d4d4" fill-opacity="0.25"/><rect x="1527.6" y="351.14" width="0.9" height="1.15" fill="#d4d4d4" fill-opacity="0.3"/><rect x="1512.7" y="353.00" width="0.9" height="1.15" fill="#d4d4d4" fill-opacity="0.3"/><rect x="1516.4" y="354.85" width="4.7" height="1.15" fill="#9cdcfe" fill-opacity="0.42"/><rect x="1521.0" y="354.85" width="0.9" height="1.15" fill="#d4d4d4" fill-opacity="0.25"/><rect x="1522.9" y="354.85" width="0.9" height="1.15" fill="#d4d4d4" fill-opacity="0.3"/><rect x="1520.1" y="356.70" width="9.3" height="1.15" fill="#9cdcfe" fill-opacity="0.42"/><rect x="1529.4" y="356.70" width="0.9" height="1.15" fill="#d4d4d4" fill-opacity="0.25"/><rect x="1531.3" y="356.70" width="9.3" height="1.15" fill="#ce9178" fill-opacity="0.42"/><rect x="1540.6" y="356.70" width="0.9" height="1.15" fill="#d4d4d4" fill-opacity="0.25"/><rect x="1520.1" y="358.55" width="4.7" height="1.15" fill="#9cdcfe" fill-opacity="0.42"/><rect x="1524.8" y="358.55" width="0.9" height="1.15" fill="#d4d4d4" fill-opacity="0.25"/><rect x="1526.6" y="358.55" width="9.3" height="1.15" fill="#ce9178" fill-opacity="0.42"/><rect x="1535.9" y="358.55" width="0.9" height="1.15" fill="#d4d4d4" fill-opacity="0.25"/><rect x="1520.1" y="360.40" width="11.2" height="1.15" fill="#9cdcfe" fill-opacity="0.42"/><rect x="1531.3" y="360.40" width="0.9" height="1.15" fill="#d4d4d4" fill-opacity="0.25"/><rect x="1533.1" y="360.40" width="0.9" height="1.15" fill="#d4d4d4" fill-opacity="0.3"/><rect x="1523.8" y="362.26" width="0.9" height="1.15" fill="#d4d4d4" fill-opacity="0.3"/><rect x="1527.6" y="364.11" width="5.6" height="1.15" fill="#9cdcfe" fill-opacity="0.42"/><rect x="1533.1" y="364.11" width="0.9" height="1.15" fill="#d4d4d4" fill-opacity="0.25"/><rect x="1535.0" y="364.11" width="0.9" height="1.15" fill="#d4d4d4" fill-opacity="0.3"/><rect x="1531.3" y="365.96" width="9.3" height="1.15" fill="#9cdcfe" fill-opacity="0.42"/><rect x="1540.6" y="365.96" width="0.9" height="1.15" fill="#d4d4d4" fill-opacity="0.25"/><rect x="1542.4" y="365.96" width="9.3" height="1.15" fill="#ce9178" fill-opacity="0.42"/><rect x="1551.7" y="365.96" width="0.9" height="1.15" fill="#d4d4d4" fill-opacity="0.25"/><rect x="1531.3" y="367.81" width="4.7" height="1.15" fill="#9cdcfe" fill-opacity="0.42"/><rect x="1535.9" y="367.81" width="0.9" height="1.15" fill="#d4d4d4" fill-opacity="0.25"/><rect x="1537.8" y="367.81" width="8.4" height="1.15" fill="#ce9178" fill-opacity="0.42"/><rect x="1546.2" y="367.81" width="0.9" height="1.15" fill="#d4d4d4" fill-opacity="0.25"/><rect x="1531.3" y="369.66" width="11.2" height="1.15" fill="#9cdcfe" fill-opacity="0.42"/><rect x="1542.4" y="369.66" width="0.9" height="1.15" fill="#d4d4d4" fill-opacity="0.25"/><rect x="1544.3" y="369.66" width="0.9" height="1.15" fill="#d4d4d4" fill-opacity="0.3"/><rect x="1535.0" y="371.52" width="0.9" height="1.15" fill="#d4d4d4" fill-opacity="0.3"/><rect x="1538.7" y="373.37" width="9.3" height="1.15" fill="#9cdcfe" fill-opacity="0.42"/><rect x="1548.0" y="373.37" width="0.9" height="1.15" fill="#d4d4d4" fill-opacity="0.25"/><rect x="1549.9" y="373.37" width="14.0" height="1.15" fill="#ce9178" fill-opacity="0.42"/><rect x="1563.8" y="373.37" width="0.9" height="1.15" fill="#d4d4d4" fill-opacity="0.25"/><rect x="1538.7" y="375.22" width="4.7" height="1.15" fill="#9cdcfe" fill-opacity="0.42"/><rect x="1543.4" y="375.22" width="0.9" height="1.15" fill="#d4d4d4" fill-opacity="0.25"/><rect x="1545.2" y="375.22" width="8.4" height="1.15" fill="#ce9178" fill-opacity="0.42"/><rect x="1553.6" y="375.22" width="0.9" height="1.15" fill="#d4d4d4" fill-opacity="0.25"/><rect x="1538.7" y="377.07" width="6.5" height="1.15" fill="#9cdcfe" fill-opacity="0.42"/><rect x="1545.2" y="377.07" width="0.9" height="1.15" fill="#d4d4d4" fill-opacity="0.25"/><rect x="1547.1" y="377.07" width="0.9" height="1.15" fill="#d4d4d4" fill-opacity="0.3"/><rect x="1542.4" y="378.92" width="10.2" height="1.15" fill="#9cdcfe" fill-opacity="0.42"/><rect x="1552.7" y="378.92" width="0.9" height="1.15" fill="#d4d4d4" fill-opacity="0.25"/><rect x="1554.5" y="378.92" width="0.9" height="1.15" fill="#d4d4d4" fill-opacity="0.3"/><rect x="1546.2" y="380.78" width="0.9" height="1.15" fill="#d4d4d4" fill-opacity="0.3"/><rect x="1549.9" y="382.63" width="5.6" height="1.15" fill="#9cdcfe" fill-opacity="0.42"/><rect x="1555.5" y="382.63" width="0.9" height="1.15" fill="#d4d4d4" fill-opacity="0.25"/><rect x="1557.3" y="382.63" width="7.4" height="1.15" fill="#ce9178" fill-opacity="0.42"/><rect x="1564.8" y="382.63" width="0.9" height="1.15" fill="#d4d4d4" fill-opacity="0.25"/><rect x="1549.9" y="384.48" width="9.3" height="1.15" fill="#9cdcfe" fill-opacity="0.42"/><rect x="1559.2" y="384.48" width="0.9" height="1.15" fill="#d4d4d4" fill-opacity="0.25"/><rect x="1561.0" y="384.48" width="11.2" height="1.15" fill="#ce9178" fill-opacity="0.42"/><rect x="1572.2" y="384.48" width="0.9" height="1.15" fill="#d4d4d4" fill-opacity="0.25"/><rect x="1549.9" y="386.33" width="4.7" height="1.15" fill="#9cdcfe" fill-opacity="0.42"/><rect x="1554.5" y="386.33" width="0.9" height="1.15" fill="#d4d4d4" fill-opacity="0.25"/><rect x="1556.4" y="386.33" width="7.4" height="1.15" fill="#ce9178" fill-opacity="0.42"/><rect x="1563.8" y="386.33" width="0.9" height="1.15" fill="#d4d4d4" fill-opacity="0.25"/><rect x="1549.9" y="388.18" width="5.6" height="1.15" fill="#9cdcfe" fill-opacity="0.42"/><rect x="1555.5" y="388.18" width="0.9" height="1.15" fill="#d4d4d4" fill-opacity="0.25"/><rect x="1557.3" y="388.18" width="1.9" height="1.15" fill="#ce9178" fill-opacity="0.42"/><rect x="1559.2" y="388.18" width="0.9" height="1.15" fill="#d4d4d4" fill-opacity="0.25"/><rect x="1549.9" y="390.04" width="6.5" height="1.15" fill="#9cdcfe" fill-opacity="0.42"/><rect x="1556.4" y="390.04" width="0.9" height="1.15" fill="#d4d4d4" fill-opacity="0.25"/><rect x="1558.2" y="390.04" width="3.7" height="1.15" fill="#ce9178" fill-opacity="0.42"/><rect x="1546.2" y="391.89" width="0.9" height="1.15" fill="#d4d4d4" fill-opacity="0.3"/><rect x="1542.4" y="393.74" width="0.9" height="1.15" fill="#d4d4d4" fill-opacity="0.3"/><rect x="1543.4" y="393.74" width="0.9" height="1.15" fill="#d4d4d4" fill-opacity="0.25"/><rect x="1542.4" y="395.59" width="13.0" height="1.15" fill="#9cdcfe" fill-opacity="0.42"/><rect x="1555.5" y="395.59" width="0.9" height="1.15" fill="#d4d4d4" fill-opacity="0.25"/><rect x="1557.3" y="395.59" width="0.9" height="1.15" fill="#d4d4d4" fill-opacity="0.3"/><rect x="1546.2" y="397.44" width="5.6" height="1.15" fill="#9cdcfe" fill-opacity="0.42"/><rect x="1551.7" y="397.44" width="0.9" height="1.15" fill="#d4d4d4" fill-opacity="0.25"/><rect x="1553.6" y="397.44" width="6.5" height="1.15" fill="#ce9178" fill-opacity="0.42"/><rect x="1560.1" y="397.44" width="0.9" height="1.15" fill="#d4d4d4" fill-opacity="0.25"/><rect x="1546.2" y="399.30" width="9.3" height="1.15" fill="#9cdcfe" fill-opacity="0.42"/><rect x="1555.5" y="399.30" width="0.9" height="1.15" fill="#d4d4d4" fill-opacity="0.25"/><rect x="1557.3" y="399.30" width="14.0" height="1.15" fill="#ce9178" fill-opacity="0.42"/><rect x="1571.3" y="399.30" width="0.9" height="1.15" fill="#d4d4d4" fill-opacity="0.25"/><rect x="1546.2" y="401.15" width="4.7" height="1.15" fill="#9cdcfe" fill-opacity="0.42"/><rect x="1550.8" y="401.15" width="0.9" height="1.15" fill="#d4d4d4" fill-opacity="0.25"/><rect x="1552.7" y="401.15" width="7.4" height="1.15" fill="#ce9178" fill-opacity="0.42"/><rect x="1542.4" y="403.00" width="0.9" height="1.15" fill="#d4d4d4" fill-opacity="0.3"/><rect x="1543.4" y="403.00" width="0.9" height="1.15" fill="#d4d4d4" fill-opacity="0.25"/><rect x="1542.4" y="404.85" width="9.3" height="1.15" fill="#9cdcfe" fill-opacity="0.42"/><rect x="1551.7" y="404.85" width="0.9" height="1.15" fill="#d4d4d4" fill-opacity="0.25"/><rect x="1553.6" y="404.85" width="15.8" height="1.15" fill="#ce9178" fill-opacity="0.42"/><rect x="1569.4" y="404.85" width="0.9" height="1.15" fill="#d4d4d4" fill-opacity="0.25"/><rect x="1542.4" y="406.70" width="4.7" height="1.15" fill="#9cdcfe" fill-opacity="0.42"/><rect x="1547.1" y="406.70" width="0.9" height="1.15" fill="#d4d4d4" fill-opacity="0.25"/><rect x="1549.0" y="406.70" width="7.4" height="1.15" fill="#ce9178" fill-opacity="0.42"/><rect x="1538.7" y="408.56" width="0.9" height="1.15" fill="#d4d4d4" fill-opacity="0.3"/><rect x="1539.7" y="408.56" width="0.9" height="1.15" fill="#d4d4d4" fill-opacity="0.25"/><rect x="1538.7" y="410.41" width="14.0" height="1.15" fill="#9cdcfe" fill-opacity="0.42"/><rect x="1552.7" y="410.41" width="0.9" height="1.15" fill="#d4d4d4" fill-opacity="0.25"/><rect x="1554.5" y="410.41" width="0.9" height="1.15" fill="#d4d4d4" fill-opacity="0.3"/><rect x="1542.4" y="412.26" width="0.9" height="1.15" fill="#d4d4d4" fill-opacity="0.3"/><rect x="1546.2" y="414.11" width="5.6" height="1.15" fill="#9cdcfe" fill-opacity="0.42"/><rect x="1551.7" y="414.11" width="0.9" height="1.15" fill="#d4d4d4" fill-opacity="0.25"/><rect x="1553.6" y="414.11" width="7.4" height="1.15" fill="#ce9178" fill-opacity="0.42"/><rect x="1561.0" y="414.11" width="0.9" height="1.15" fill="#d4d4d4" fill-opacity="0.25"/><rect x="1546.2" y="415.96" width="9.3" height="1.15" fill="#9cdcfe" fill-opacity="0.42"/><rect x="1555.5" y="415.96" width="0.9" height="1.15" fill="#d4d4d4" fill-opacity="0.25"/><rect x="1557.3" y="415.96" width="14.0" height="1.15" fill="#ce9178" fill-opacity="0.42"/><rect x="1571.3" y="415.96" width="0.9" height="1.15" fill="#d4d4d4" fill-opacity="0.25"/><rect x="1546.2" y="417.82" width="4.7" height="1.15" fill="#9cdcfe" fill-opacity="0.42"/><rect x="1550.8" y="417.82" width="0.9" height="1.15" fill="#d4d4d4" fill-opacity="0.25"/><rect x="1552.7" y="417.82" width="7.4" height="1.15" fill="#ce9178" fill-opacity="0.42"/><rect x="1542.4" y="419.67" width="0.9" height="1.15" fill="#d4d4d4" fill-opacity="0.3"/><rect x="1538.7" y="421.52" width="0.9" height="1.15" fill="#d4d4d4" fill-opacity="0.3"/><rect x="1535.0" y="423.37" width="0.9" height="1.15" fill="#d4d4d4" fill-opacity="0.3"/><rect x="1531.3" y="425.22" width="0.9" height="1.15" fill="#d4d4d4" fill-opacity="0.3"/><rect x="1527.6" y="427.08" width="0.9" height="1.15" fill="#d4d4d4" fill-opacity="0.3"/><rect x="1528.5" y="427.08" width="0.9" height="1.15" fill="#d4d4d4" fill-opacity="0.25"/><rect x="1527.6" y="428.93" width="5.6" height="1.15" fill="#9cdcfe" fill-opacity="0.42"/><rect x="1533.1" y="428.93" width="0.9" height="1.15" fill="#d4d4d4" fill-opacity="0.25"/><rect x="1535.0" y="428.93" width="18.6" height="1.15" fill="#ce9178" fill-opacity="0.42"/><rect x="1553.6" y="428.93" width="0.9" height="1.15" fill="#d4d4d4" fill-opacity="0.25"/><rect x="1527.6" y="430.78" width="9.3" height="1.15" fill="#9cdcfe" fill-opacity="0.42"/><rect x="1536.9" y="430.78" width="0.9" height="1.15" fill="#d4d4d4" fill-opacity="0.25"/><rect x="1538.7" y="430.78" width="21.4" height="1.15" fill="#ce9178" fill-opacity="0.42"/><rect x="1560.1" y="430.78" width="0.9" height="1.15" fill="#d4d4d4" fill-opacity="0.25"/><rect x="1527.6" y="432.63" width="15.8" height="1.15" fill="#9cdcfe" fill-opacity="0.42"/><rect x="1543.4" y="432.63" width="0.9" height="1.15" fill="#d4d4d4" fill-opacity="0.25"/><rect x="1545.2" y="432.63" width="0.9" height="1.15" fill="#d4d4d4" fill-opacity="0.3"/><rect x="1531.3" y="434.48" width="0.9" height="1.15" fill="#d4d4d4" fill-opacity="0.3"/><rect x="1535.0" y="436.34" width="5.6" height="1.15" fill="#9cdcfe" fill-opacity="0.42"/><rect x="1540.6" y="436.34" width="0.9" height="1.15" fill="#d4d4d4" fill-opacity="0.25"/><rect x="1542.4" y="436.34" width="7.4" height="1.15" fill="#ce9178" fill-opacity="0.42"/><rect x="1549.9" y="436.34" width="0.9" height="1.15" fill="#d4d4d4" fill-opacity="0.25"/><rect x="1535.0" y="438.19" width="9.3" height="1.15" fill="#9cdcfe" fill-opacity="0.42"/><rect x="1544.3" y="438.19" width="0.9" height="1.15" fill="#d4d4d4" fill-opacity="0.25"/><rect x="1546.2" y="438.19" width="13.0" height="1.15" fill="#ce9178" fill-opacity="0.42"/><rect x="1559.2" y="438.19" width="0.9" height="1.15" fill="#d4d4d4" fill-opacity="0.25"/><rect x="1535.0" y="440.04" width="4.7" height="1.15" fill="#9cdcfe" fill-opacity="0.42"/><rect x="1539.7" y="440.04" width="0.9" height="1.15" fill="#d4d4d4" fill-opacity="0.25"/><rect x="1541.5" y="440.04" width="7.4" height="1.15" fill="#ce9178" fill-opacity="0.42"/><rect x="1549.0" y="440.04" width="0.9" height="1.15" fill="#d4d4d4" fill-opacity="0.25"/><rect x="1535.0" y="441.89" width="5.6" height="1.15" fill="#9cdcfe" fill-opacity="0.42"/><rect x="1540.6" y="441.89" width="0.9" height="1.15" fill="#d4d4d4" fill-opacity="0.25"/><rect x="1542.4" y="441.89" width="1.9" height="1.15" fill="#ce9178" fill-opacity="0.42"/><rect x="1531.3" y="443.74" width="0.9" height="1.15" fill="#d4d4d4" fill-opacity="0.3"/><rect x="1527.6" y="445.60" width="0.9" height="1.15" fill="#d4d4d4" fill-opacity="0.3"/><rect x="1528.5" y="445.60" width="0.9" height="1.15" fill="#d4d4d4" fill-opacity="0.25"/><rect x="1527.6" y="447.45" width="4.7" height="1.15" fill="#9cdcfe" fill-opacity="0.42"/><rect x="1532.2" y="447.45" width="0.9" height="1.15" fill="#d4d4d4" fill-opacity="0.25"/><rect x="1534.1" y="447.45" width="7.4" height="1.15" fill="#ce9178" fill-opacity="0.42"/><rect x="1523.8" y="449.30" width="0.9" height="1.15" fill="#d4d4d4" fill-opacity="0.3"/><rect x="1524.8" y="449.30" width="0.9" height="1.15" fill="#d4d4d4" fill-opacity="0.25"/><rect x="1523.8" y="451.15" width="0.9" height="1.15" fill="#d4d4d4" fill-opacity="0.3"/><rect x="1527.6" y="453.00" width="5.6" height="1.15" fill="#9cdcfe" fill-opacity="0.42"/><rect x="1533.1" y="453.00" width="0.9" height="1.15" fill="#d4d4d4" fill-opacity="0.25"/><rect x="1535.0" y="453.00" width="0.9" height="1.15" fill="#d4d4d4" fill-opacity="0.3"/><rect x="1531.3" y="454.86" width="9.3" height="1.15" fill="#9cdcfe" fill-opacity="0.42"/><rect x="1540.6" y="454.86" width="0.9" height="1.15" fill="#d4d4d4" fill-opacity="0.25"/><rect x="1542.4" y="454.86" width="9.3" height="1.15" fill="#ce9178" fill-opacity="0.42"/><rect x="1551.7" y="454.86" width="0.9" height="1.15" fill="#d4d4d4" fill-opacity="0.25"/><rect x="1531.3" y="456.71" width="4.7" height="1.15" fill="#9cdcfe" fill-opacity="0.42"/><rect x="1535.9" y="456.71" width="0.9" height="1.15" fill="#d4d4d4" fill-opacity="0.25"/><rect x="1537.8" y="456.71" width="8.4" height="1.15" fill="#ce9178" fill-opacity="0.42"/><rect x="1546.2" y="456.71" width="0.9" height="1.15" fill="#d4d4d4" fill-opacity="0.25"/><rect x="1531.3" y="458.56" width="11.2" height="1.15" fill="#9cdcfe" fill-opacity="0.42"/><rect x="1542.4" y="458.56" width="0.9" height="1.15" fill="#d4d4d4" fill-opacity="0.25"/><rect x="1544.3" y="458.56" width="0.9" height="1.15" fill="#d4d4d4" fill-opacity="0.3"/><rect x="1535.0" y="460.41" width="0.9" height="1.15" fill="#d4d4d4" fill-opacity="0.3"/><rect x="1538.7" y="462.26" width="11.2" height="1.15" fill="#9cdcfe" fill-opacity="0.42"/><rect x="1549.9" y="462.26" width="0.9" height="1.15" fill="#d4d4d4" fill-opacity="0.25"/><rect x="1551.7" y="462.26" width="0.9" height="1.15" fill="#d4d4d4" fill-opacity="0.3"/><rect x="1542.4" y="464.12" width="10.2" height="1.15" fill="#9cdcfe" fill-opacity="0.42"/><rect x="1552.7" y="464.12" width="0.9" height="1.15" fill="#d4d4d4" fill-opacity="0.25"/><rect x="1554.5" y="464.12" width="0.9" height="1.15" fill="#d4d4d4" fill-opacity="0.3"/><rect x="1546.2" y="465.97" width="0.9" height="1.15" fill="#d4d4d4" fill-opacity="0.3"/><rect x="1549.9" y="467.82" width="5.6" height="1.15" fill="#9cdcfe" fill-opacity="0.42"/><rect x="1555.5" y="467.82" width="0.9" height="1.15" fill="#d4d4d4" fill-opacity="0.25"/><rect x="1557.3" y="467.82" width="7.4" height="1.15" fill="#ce9178" fill-opacity="0.42"/><rect x="1564.8" y="467.82" width="0.9" height="1.15" fill="#d4d4d4" fill-opacity="0.25"/><rect x="1549.9" y="469.67" width="9.3" height="1.15" fill="#9cdcfe" fill-opacity="0.42"/><rect x="1559.2" y="469.67" width="0.9" height="1.15" fill="#d4d4d4" fill-opacity="0.25"/><rect x="1561.0" y="469.67" width="11.2" height="1.15" fill="#ce9178" fill-opacity="0.42"/><rect x="1572.2" y="469.67" width="0.9" height="1.15" fill="#d4d4d4" fill-opacity="0.25"/><rect x="1549.9" y="471.52" width="4.7" height="1.15" fill="#9cdcfe" fill-opacity="0.42"/><rect x="1554.5" y="471.52" width="0.9" height="1.15" fill="#d4d4d4" fill-opacity="0.25"/><rect x="1556.4" y="471.52" width="8.4" height="1.15" fill="#ce9178" fill-opacity="0.42"/><rect x="1564.8" y="471.52" width="0.9" height="1.15" fill="#d4d4d4" fill-opacity="0.25"/><rect x="1549.9" y="473.38" width="5.6" height="1.15" fill="#9cdcfe" fill-opacity="0.42"/><rect x="1555.5" y="473.38" width="0.9" height="1.15" fill="#d4d4d4" fill-opacity="0.25"/><rect x="1557.3" y="473.38" width="1.9" height="1.15" fill="#ce9178" fill-opacity="0.42"/><rect x="1559.2" y="473.38" width="0.9" height="1.15" fill="#d4d4d4" fill-opacity="0.25"/><rect x="1549.9" y="475.23" width="6.5" height="1.15" fill="#9cdcfe" fill-opacity="0.42"/><rect x="1556.4" y="475.23" width="0.9" height="1.15" fill="#d4d4d4" fill-opacity="0.25"/><rect x="1558.2" y="475.23" width="2.8" height="1.15" fill="#ce9178" fill-opacity="0.42"/><rect x="1546.2" y="477.08" width="0.9" height="1.15" fill="#d4d4d4" fill-opacity="0.3"/><rect x="1547.1" y="477.08" width="0.9" height="1.15" fill="#d4d4d4" fill-opacity="0.25"/><rect x="1546.2" y="478.93" width="0.9" height="1.15" fill="#d4d4d4" fill-opacity="0.3"/><rect x="1549.9" y="480.78" width="5.6" height="1.15" fill="#9cdcfe" fill-opacity="0.42"/><rect x="1555.5" y="480.78" width="0.9" height="1.15" fill="#d4d4d4" fill-opacity="0.25"/><rect x="1557.3" y="480.78" width="7.4" height="1.15" fill="#ce9178" fill-opacity="0.42"/><rect x="1564.8" y="480.78" width="0.9" height="1.15" fill="#d4d4d4" fill-opacity="0.25"/><rect x="1549.9" y="482.64" width="9.3" height="1.15" fill="#9cdcfe" fill-opacity="0.42"/><rect x="1559.2" y="482.64" width="0.9" height="1.15" fill="#d4d4d4" fill-opacity="0.25"/><rect x="1561.0" y="482.64" width="11.2" height="1.15" fill="#ce9178" fill-opacity="0.42"/><rect x="1572.2" y="482.64" width="0.9" height="1.15" fill="#d4d4d4" fill-opacity="0.25"/><rect x="1549.9" y="484.49" width="4.7" height="1.15" fill="#9cdcfe" fill-opacity="0.42"/><rect x="1554.5" y="484.49" width="0.9" height="1.15" fill="#d4d4d4" fill-opacity="0.25"/><rect x="1556.4" y="484.49" width="8.4" height="1.15" fill="#ce9178" fill-opacity="0.42"/><rect x="1564.8" y="484.49" width="0.9" height="1.15" fill="#d4d4d4" fill-opacity="0.25"/><rect x="1549.9" y="486.34" width="5.6" height="1.15" fill="#9cdcfe" fill-opacity="0.42"/><rect x="1555.5" y="486.34" width="0.9" height="1.15" fill="#d4d4d4" fill-opacity="0.25"/><rect x="1557.3" y="486.34" width="1.9" height="1.15" fill="#ce9178" fill-opacity="0.42"/><rect x="1559.2" y="486.34" width="0.9" height="1.15" fill="#d4d4d4" fill-opacity="0.25"/><rect x="1549.9" y="488.19" width="6.5" height="1.15" fill="#9cdcfe" fill-opacity="0.42"/><rect x="1556.4" y="488.19" width="0.9" height="1.15" fill="#d4d4d4" fill-opacity="0.25"/><rect x="1558.2" y="488.19" width="2.8" height="1.15" fill="#ce9178" fill-opacity="0.42"/><rect x="1546.2" y="490.04" width="0.9" height="1.15" fill="#d4d4d4" fill-opacity="0.3"/><rect x="1542.4" y="491.90" width="0.9" height="1.15" fill="#d4d4d4" fill-opacity="0.3"/><rect x="1543.4" y="491.90" width="0.9" height="1.15" fill="#d4d4d4" fill-opacity="0.25"/><rect x="1542.4" y="493.75" width="13.0" height="1.15" fill="#9cdcfe" fill-opacity="0.42"/><rect x="1555.5" y="493.75" width="0.9" height="1.15" fill="#d4d4d4" fill-opacity="0.25"/><rect x="1557.3" y="493.75" width="0.9" height="1.15" fill="#d4d4d4" fill-opacity="0.3"/><rect x="1546.2" y="495.60" width="5.6" height="1.15" fill="#9cdcfe" fill-opacity="0.42"/><rect x="1551.7" y="495.60" width="0.9" height="1.15" fill="#d4d4d4" fill-opacity="0.25"/><rect x="1553.6" y="495.60" width="7.4" height="1.15" fill="#ce9178" fill-opacity="0.42"/><rect x="1561.0" y="495.60" width="0.9" height="1.15" fill="#d4d4d4" fill-opacity="0.25"/><rect x="1546.2" y="497.45" width="9.3" height="1.15" fill="#9cdcfe" fill-opacity="0.42"/><rect x="1555.5" y="497.45" width="0.9" height="1.15" fill="#d4d4d4" fill-opacity="0.25"/><rect x="1557.3" y="497.45" width="14.0" height="1.15" fill="#ce9178" fill-opacity="0.42"/><rect x="1571.3" y="497.45" width="0.9" height="1.15" fill="#d4d4d4" fill-opacity="0.25"/><rect x="1546.2" y="499.30" width="4.7" height="1.15" fill="#9cdcfe" fill-opacity="0.42"/><rect x="1550.8" y="499.30" width="0.9" height="1.15" fill="#d4d4d4" fill-opacity="0.25"/><rect x="1552.7" y="499.30" width="9.3" height="1.15" fill="#ce9178" fill-opacity="0.42"/><rect x="1542.4" y="501.16" width="0.9" height="1.15" fill="#d4d4d4" fill-opacity="0.3"/><rect x="1543.4" y="501.16" width="0.9" height="1.15" fill="#d4d4d4" fill-opacity="0.25"/><rect x="1542.4" y="503.01" width="9.3" height="1.15" fill="#9cdcfe" fill-opacity="0.42"/><rect x="1551.7" y="503.01" width="0.9" height="1.15" fill="#d4d4d4" fill-opacity="0.25"/><rect x="1553.6" y="503.01" width="15.8" height="1.15" fill="#ce9178" fill-opacity="0.42"/><rect x="1569.4" y="503.01" width="0.9" height="1.15" fill="#d4d4d4" fill-opacity="0.25"/><rect x="1542.4" y="504.86" width="4.7" height="1.15" fill="#9cdcfe" fill-opacity="0.42"/><rect x="1547.1" y="504.86" width="0.9" height="1.15" fill="#d4d4d4" fill-opacity="0.25"/><rect x="1549.0" y="504.86" width="9.3" height="1.15" fill="#ce9178" fill-opacity="0.42"/><rect x="1538.7" y="506.71" width="0.9" height="1.15" fill="#d4d4d4" fill-opacity="0.3"/><rect x="1539.7" y="506.71" width="0.9" height="1.15" fill="#d4d4d4" fill-opacity="0.25"/><rect x="1538.7" y="508.56" width="9.3" height="1.15" fill="#9cdcfe" fill-opacity="0.42"/><rect x="1548.0" y="508.56" width="0.9" height="1.15" fill="#d4d4d4" fill-opacity="0.25"/><rect x="1549.9" y="508.56" width="22.3" height="1.15" fill="#ce9178" fill-opacity="0.42"/><rect x="1572.2" y="508.56" width="0.9" height="1.15" fill="#d4d4d4" fill-opacity="0.25"/><rect x="1538.7" y="510.42" width="4.7" height="1.15" fill="#9cdcfe" fill-opacity="0.42"/><rect x="1543.4" y="510.42" width="0.9" height="1.15" fill="#d4d4d4" fill-opacity="0.25"/><rect x="1545.2" y="510.42" width="9.3" height="1.15" fill="#ce9178" fill-opacity="0.42"/><rect x="1535.0" y="512.27" width="0.9" height="1.15" fill="#d4d4d4" fill-opacity="0.3"/><rect x="1531.3" y="514.12" width="0.9" height="1.15" fill="#d4d4d4" fill-opacity="0.3"/><rect x="1527.6" y="515.97" width="0.9" height="1.15" fill="#d4d4d4" fill-opacity="0.3"/><rect x="1528.5" y="515.97" width="0.9" height="1.15" fill="#d4d4d4" fill-opacity="0.25"/><rect x="1527.6" y="517.82" width="5.6" height="1.15" fill="#9cdcfe" fill-opacity="0.42"/><rect x="1533.1" y="517.82" width="0.9" height="1.15" fill="#d4d4d4" fill-opacity="0.25"/><rect x="1535.0" y="517.82" width="53.0" height="1.15" fill="#ce9178" fill-opacity="0.42"/><rect x="1527.6" y="519.68" width="9.3" height="1.15" fill="#9cdcfe" fill-opacity="0.42"/><rect x="1536.9" y="519.68" width="0.9" height="1.15" fill="#d4d4d4" fill-opacity="0.25"/><rect x="1538.7" y="519.68" width="21.4" height="1.15" fill="#ce9178" fill-opacity="0.42"/><rect x="1560.1" y="519.68" width="0.9" height="1.15" fill="#d4d4d4" fill-opacity="0.25"/><rect x="1527.6" y="521.53" width="4.7" height="1.15" fill="#9cdcfe" fill-opacity="0.42"/><rect x="1532.2" y="521.53" width="0.9" height="1.15" fill="#d4d4d4" fill-opacity="0.25"/><rect x="1534.1" y="521.53" width="10.2" height="1.15" fill="#ce9178" fill-opacity="0.42"/><rect x="1523.8" y="523.38" width="0.9" height="1.15" fill="#d4d4d4" fill-opacity="0.3"/><rect x="1524.8" y="523.38" width="0.9" height="1.15" fill="#d4d4d4" fill-opacity="0.25"/><rect x="1523.8" y="525.23" width="0.9" height="1.15" fill="#d4d4d4" fill-opacity="0.3"/><rect x="1527.6" y="527.08" width="5.6" height="1.15" fill="#9cdcfe" fill-opacity="0.42"/><rect x="1533.1" y="527.08" width="0.9" height="1.15" fill="#d4d4d4" fill-opacity="0.25"/><rect x="1535.0" y="527.08" width="0.9" height="1.15" fill="#d4d4d4" fill-opacity="0.3"/><rect x="1531.3" y="528.94" width="9.3" height="1.15" fill="#9cdcfe" fill-opacity="0.42"/><rect x="1540.6" y="528.94" width="0.9" height="1.15" fill="#d4d4d4" fill-opacity="0.25"/><rect x="1542.4" y="528.94" width="9.3" height="1.15" fill="#ce9178" fill-opacity="0.42"/><rect x="1551.7" y="528.94" width="0.9" height="1.15" fill="#d4d4d4" fill-opacity="0.25"/><rect x="1531.3" y="530.79" width="4.7" height="1.15" fill="#9cdcfe" fill-opacity="0.42"/><rect x="1535.9" y="530.79" width="0.9" height="1.15" fill="#d4d4d4" fill-opacity="0.25"/><rect x="1537.8" y="530.79" width="8.4" height="1.15" fill="#ce9178" fill-opacity="0.42"/><rect x="1546.2" y="530.79" width="0.9" height="1.15" fill="#d4d4d4" fill-opacity="0.25"/><rect x="1531.3" y="532.64" width="11.2" height="1.15" fill="#9cdcfe" fill-opacity="0.42"/><rect x="1542.4" y="532.64" width="0.9" height="1.15" fill="#d4d4d4" fill-opacity="0.25"/><rect x="1544.3" y="532.64" width="0.9" height="1.15" fill="#d4d4d4" fill-opacity="0.3"/><rect x="1535.0" y="534.49" width="0.9" height="1.15" fill="#d4d4d4" fill-opacity="0.3"/><rect x="1538.7" y="536.34" width="11.2" height="1.15" fill="#9cdcfe" fill-opacity="0.42"/><rect x="1549.9" y="536.34" width="0.9" height="1.15" fill="#d4d4d4" fill-opacity="0.25"/><rect x="1551.7" y="536.34" width="0.9" height="1.15" fill="#d4d4d4" fill-opacity="0.3"/><rect x="1542.4" y="538.20" width="10.2" height="1.15" fill="#9cdcfe" fill-opacity="0.42"/><rect x="1552.7" y="538.20" width="0.9" height="1.15" fill="#d4d4d4" fill-opacity="0.25"/><rect x="1554.5" y="538.20" width="0.9" height="1.15" fill="#d4d4d4" fill-opacity="0.3"/><rect x="1546.2" y="540.05" width="0.9" height="1.15" fill="#d4d4d4" fill-opacity="0.3"/><rect x="1549.9" y="541.90" width="5.6" height="1.15" fill="#9cdcfe" fill-opacity="0.42"/><rect x="1555.5" y="541.90" width="0.9" height="1.15" fill="#d4d4d4" fill-opacity="0.25"/><rect x="1557.3" y="541.90" width="7.4" height="1.15" fill="#ce9178" fill-opacity="0.42"/><rect x="1564.8" y="541.90" width="0.9" height="1.15" fill="#d4d4d4" fill-opacity="0.25"/><rect x="1549.9" y="543.75" width="9.3" height="1.15" fill="#9cdcfe" fill-opacity="0.42"/><rect x="1559.2" y="543.75" width="0.9" height="1.15" fill="#d4d4d4" fill-opacity="0.25"/><rect x="1561.0" y="543.75" width="11.2" height="1.15" fill="#ce9178" fill-opacity="0.42"/><rect x="1572.2" y="543.75" width="0.9" height="1.15" fill="#d4d4d4" fill-opacity="0.25"/><rect x="1549.9" y="545.60" width="4.7" height="1.15" fill="#9cdcfe" fill-opacity="0.42"/><rect x="1554.5" y="545.60" width="0.9" height="1.15" fill="#d4d4d4" fill-opacity="0.25"/><rect x="1556.4" y="545.60" width="8.4" height="1.15" fill="#ce9178" fill-opacity="0.42"/><rect x="1564.8" y="545.60" width="0.9" height="1.15" fill="#d4d4d4" fill-opacity="0.25"/><rect x="1549.9" y="547.46" width="5.6" height="1.15" fill="#9cdcfe" fill-opacity="0.42"/><rect x="1555.5" y="547.46" width="0.9" height="1.15" fill="#d4d4d4" fill-opacity="0.25"/><rect x="1557.3" y="547.46" width="1.9" height="1.15" fill="#ce9178" fill-opacity="0.42"/><rect x="1559.2" y="547.46" width="0.9" height="1.15" fill="#d4d4d4" fill-opacity="0.25"/><rect x="1549.9" y="549.31" width="6.5" height="1.15" fill="#9cdcfe" fill-opacity="0.42"/><rect x="1556.4" y="549.31" width="0.9" height="1.15" fill="#d4d4d4" fill-opacity="0.25"/><rect x="1558.2" y="549.31" width="2.8" height="1.15" fill="#ce9178" fill-opacity="0.42"/><rect x="1546.2" y="551.16" width="0.9" height="1.15" fill="#d4d4d4" fill-opacity="0.3"/><rect x="1547.1" y="551.16" width="0.9" height="1.15" fill="#d4d4d4" fill-opacity="0.25"/><rect x="1546.2" y="553.01" width="0.9" height="1.15" fill="#d4d4d4" fill-opacity="0.3"/><rect x="1549.9" y="554.86" width="5.6" height="1.15" fill="#9cdcfe" fill-opacity="0.42"/><rect x="1555.5" y="554.86" width="0.9" height="1.15" fill="#d4d4d4" fill-opacity="0.25"/><rect x="1557.3" y="554.86" width="7.4" height="1.15" fill="#ce9178" fill-opacity="0.42"/><rect x="1564.8" y="554.86" width="0.9" height="1.15" fill="#d4d4d4" fill-opacity="0.25"/><rect x="1549.9" y="556.72" width="9.3" height="1.15" fill="#9cdcfe" fill-opacity="0.42"/><rect x="1559.2" y="556.72" width="0.9" height="1.15" fill="#d4d4d4" fill-opacity="0.25"/><rect x="1561.0" y="556.72" width="11.2" height="1.15" fill="#ce9178" fill-opacity="0.42"/><rect x="1572.2" y="556.72" width="0.9" height="1.15" fill="#d4d4d4" fill-opacity="0.25"/><rect x="1549.9" y="558.57" width="4.7" height="1.15" fill="#9cdcfe" fill-opacity="0.42"/><rect x="1554.5" y="558.57" width="0.9" height="1.15" fill="#d4d4d4" fill-opacity="0.25"/><rect x="1556.4" y="558.57" width="8.4" height="1.15" fill="#ce9178" fill-opacity="0.42"/><rect x="1564.8" y="558.57" width="0.9" height="1.15" fill="#d4d4d4" fill-opacity="0.25"/><rect x="1549.9" y="560.42" width="5.6" height="1.15" fill="#9cdcfe" fill-opacity="0.42"/><rect x="1555.5" y="560.42" width="0.9" height="1.15" fill="#d4d4d4" fill-opacity="0.25"/><rect x="1557.3" y="560.42" width="1.9" height="1.15" fill="#ce9178" fill-opacity="0.42"/><rect x="1559.2" y="560.42" width="0.9" height="1.15" fill="#d4d4d4" fill-opacity="0.25"/><rect x="1549.9" y="562.27" width="6.5" height="1.15" fill="#9cdcfe" fill-opacity="0.42"/><rect x="1556.4" y="562.27" width="0.9" height="1.15" fill="#d4d4d4" fill-opacity="0.25"/><rect x="1558.2" y="562.27" width="2.8" height="1.15" fill="#ce9178" fill-opacity="0.42"/><rect x="1546.2" y="564.12" width="0.9" height="1.15" fill="#d4d4d4" fill-opacity="0.3"/><rect x="1542.4" y="565.98" width="0.9" height="1.15" fill="#d4d4d4" fill-opacity="0.3"/><rect x="1543.4" y="565.98" width="0.9" height="1.15" fill="#d4d4d4" fill-opacity="0.25"/><rect x="1542.4" y="567.83" width="13.0" height="1.15" fill="#9cdcfe" fill-opacity="0.42"/><rect x="1555.5" y="567.83" width="0.9" height="1.15" fill="#d4d4d4" fill-opacity="0.25"/><rect x="1557.3" y="567.83" width="0.9" height="1.15" fill="#d4d4d4" fill-opacity="0.3"/><rect x="1546.2" y="569.68" width="5.6" height="1.15" fill="#9cdcfe" fill-opacity="0.42"/><rect x="1551.7" y="569.68" width="0.9" height="1.15" fill="#d4d4d4" fill-opacity="0.25"/><rect x="1553.6" y="569.68" width="7.4" height="1.15" fill="#ce9178" fill-opacity="0.42"/><rect x="1561.0" y="569.68" width="0.9" height="1.15" fill="#d4d4d4" fill-opacity="0.25"/><rect x="1546.2" y="571.53" width="9.3" height="1.15" fill="#9cdcfe" fill-opacity="0.42"/><rect x="1555.5" y="571.53" width="0.9" height="1.15" fill="#d4d4d4" fill-opacity="0.25"/><rect x="1557.3" y="571.53" width="14.0" height="1.15" fill="#ce9178" fill-opacity="0.42"/><rect x="1571.3" y="571.53" width="0.9" height="1.15" fill="#d4d4d4" fill-opacity="0.25"/><rect x="1546.2" y="573.38" width="4.7" height="1.15" fill="#9cdcfe" fill-opacity="0.42"/><rect x="1550.8" y="573.38" width="0.9" height="1.15" fill="#d4d4d4" fill-opacity="0.25"/><rect x="1552.7" y="573.38" width="9.3" height="1.15" fill="#ce9178" fill-opacity="0.42"/><rect x="1542.4" y="575.24" width="0.9" height="1.15" fill="#d4d4d4" fill-opacity="0.3"/><rect x="1543.4" y="575.24" width="0.9" height="1.15" fill="#d4d4d4" fill-opacity="0.25"/><rect x="1542.4" y="577.09" width="9.3" height="1.15" fill="#9cdcfe" fill-opacity="0.42"/><rect x="1551.7" y="577.09" width="0.9" height="1.15" fill="#d4d4d4" fill-opacity="0.25"/><rect x="1553.6" y="577.09" width="15.8" height="1.15" fill="#ce9178" fill-opacity="0.42"/><rect x="1569.4" y="577.09" width="0.9" height="1.15" fill="#d4d4d4" fill-opacity="0.25"/><rect x="1542.4" y="578.94" width="4.7" height="1.15" fill="#9cdcfe" fill-opacity="0.42"/><rect x="1547.1" y="578.94" width="0.9" height="1.15" fill="#d4d4d4" fill-opacity="0.25"/><rect x="1549.0" y="578.94" width="9.3" height="1.15" fill="#ce9178" fill-opacity="0.42"/><rect x="1538.7" y="580.79" width="0.9" height="1.15" fill="#d4d4d4" fill-opacity="0.3"/><rect x="1539.7" y="580.79" width="0.9" height="1.15" fill="#d4d4d4" fill-opacity="0.25"/><rect x="1538.7" y="582.64" width="9.3" height="1.15" fill="#9cdcfe" fill-opacity="0.42"/><rect x="1548.0" y="582.64" width="0.9" height="1.15" fill="#d4d4d4" fill-opacity="0.25"/><rect x="1549.9" y="582.64" width="22.3" height="1.15" fill="#ce9178" fill-opacity="0.42"/><rect x="1572.2" y="582.64" width="0.9" height="1.15" fill="#d4d4d4" fill-opacity="0.25"/><rect x="1538.7" y="584.50" width="4.7" height="1.15" fill="#9cdcfe" fill-opacity="0.42"/><rect x="1543.4" y="584.50" width="0.9" height="1.15" fill="#d4d4d4" fill-opacity="0.25"/><rect x="1545.2" y="584.50" width="9.3" height="1.15" fill="#ce9178" fill-opacity="0.42"/><rect x="1535.0" y="586.35" width="0.9" height="1.15" fill="#d4d4d4" fill-opacity="0.3"/><rect x="1531.3" y="588.20" width="0.9" height="1.15" fill="#d4d4d4" fill-opacity="0.3"/><rect x="1527.6" y="590.05" width="0.9" height="1.15" fill="#d4d4d4" fill-opacity="0.3"/><rect x="1528.5" y="590.05" width="0.9" height="1.15" fill="#d4d4d4" fill-opacity="0.25"/><rect x="1527.6" y="591.90" width="5.6" height="1.15" fill="#9cdcfe" fill-opacity="0.42"/><rect x="1533.1" y="591.90" width="0.9" height="1.15" fill="#d4d4d4" fill-opacity="0.25"/><rect x="1535.0" y="591.90" width="53.0" height="1.15" fill="#ce9178" fill-opacity="0.42"/><rect x="1527.6" y="593.76" width="9.3" height="1.15" fill="#9cdcfe" fill-opacity="0.42"/><rect x="1536.9" y="593.76" width="0.9" height="1.15" fill="#d4d4d4" fill-opacity="0.25"/><rect x="1538.7" y="593.76" width="21.4" height="1.15" fill="#ce9178" fill-opacity="0.42"/><rect x="1560.1" y="593.76" width="0.9" height="1.15" fill="#d4d4d4" fill-opacity="0.25"/><rect x="1527.6" y="595.61" width="4.7" height="1.15" fill="#9cdcfe" fill-opacity="0.42"/><rect x="1532.2" y="595.61" width="0.9" height="1.15" fill="#d4d4d4" fill-opacity="0.25"/><rect x="1534.1" y="595.61" width="10.2" height="1.15" fill="#ce9178" fill-opacity="0.42"/><rect x="1523.8" y="597.46" width="0.9" height="1.15" fill="#d4d4d4" fill-opacity="0.3"/><rect x="1524.8" y="597.46" width="0.9" height="1.15" fill="#d4d4d4" fill-opacity="0.25"/><rect x="1523.8" y="599.31" width="0.9" height="1.15" fill="#d4d4d4" fill-opacity="0.3"/><rect x="1527.6" y="601.16" width="5.6" height="1.15" fill="#9cdcfe" fill-opacity="0.42"/><rect x="1533.1" y="601.16" width="0.9" height="1.15" fill="#d4d4d4" fill-opacity="0.25"/><rect x="1535.0" y="601.16" width="0.9" height="1.15" fill="#d4d4d4" fill-opacity="0.3"/><rect x="1531.3" y="603.02" width="9.3" height="1.15" fill="#9cdcfe" fill-opacity="0.42"/><rect x="1540.6" y="603.02" width="0.9" height="1.15" fill="#d4d4d4" fill-opacity="0.25"/><rect x="1542.4" y="603.02" width="9.3" height="1.15" fill="#ce9178" fill-opacity="0.42"/><rect x="1551.7" y="603.02" width="0.9" height="1.15" fill="#d4d4d4" fill-opacity="0.25"/><rect x="1531.3" y="604.87" width="4.7" height="1.15" fill="#9cdcfe" fill-opacity="0.42"/><rect x="1535.9" y="604.87" width="0.9" height="1.15" fill="#d4d4d4" fill-opacity="0.25"/><rect x="1537.8" y="604.87" width="8.4" height="1.15" fill="#ce9178" fill-opacity="0.42"/><rect x="1546.2" y="604.87" width="0.9" height="1.15" fill="#d4d4d4" fill-opacity="0.25"/><rect x="1531.3" y="606.72" width="11.2" height="1.15" fill="#9cdcfe" fill-opacity="0.42"/><rect x="1542.4" y="606.72" width="0.9" height="1.15" fill="#d4d4d4" fill-opacity="0.25"/><rect x="1544.3" y="606.72" width="0.9" height="1.15" fill="#d4d4d4" fill-opacity="0.3"/><rect x="1535.0" y="608.57" width="0.9" height="1.15" fill="#d4d4d4" fill-opacity="0.3"/><rect x="1538.7" y="610.42" width="9.3" height="1.15" fill="#9cdcfe" fill-opacity="0.42"/><rect x="1548.0" y="610.42" width="0.9" height="1.15" fill="#d4d4d4" fill-opacity="0.25"/><rect x="1549.9" y="610.42" width="14.0" height="1.15" fill="#ce9178" fill-opacity="0.42"/><rect x="1563.8" y="610.42" width="0.9" height="1.15" fill="#d4d4d4" fill-opacity="0.25"/><rect x="1538.7" y="612.28" width="4.7" height="1.15" fill="#9cdcfe" fill-opacity="0.42"/><rect x="1543.4" y="612.28" width="0.9" height="1.15" fill="#d4d4d4" fill-opacity="0.25"/><rect x="1545.2" y="612.28" width="9.3" height="1.15" fill="#ce9178" fill-opacity="0.42"/><rect x="1554.5" y="612.28" width="0.9" height="1.15" fill="#d4d4d4" fill-opacity="0.25"/><rect x="1538.7" y="614.13" width="6.5" height="1.15" fill="#9cdcfe" fill-opacity="0.42"/><rect x="1545.2" y="614.13" width="0.9" height="1.15" fill="#d4d4d4" fill-opacity="0.25"/><rect x="1547.1" y="614.13" width="0.9" height="1.15" fill="#d4d4d4" fill-opacity="0.3"/><rect x="1542.4" y="615.98" width="5.6" height="1.15" fill="#9cdcfe" fill-opacity="0.42"/><rect x="1548.0" y="615.98" width="0.9" height="1.15" fill="#d4d4d4" fill-opacity="0.25"/><rect x="1549.9" y="615.98" width="6.5" height="1.15" fill="#ce9178" fill-opacity="0.42"/><rect x="1556.4" y="615.98" width="0.9" height="1.15" fill="#d4d4d4" fill-opacity="0.25"/><rect x="1542.4" y="617.83" width="9.3" height="1.15" fill="#9cdcfe" fill-opacity="0.42"/><rect x="1551.7" y="617.83" width="0.9" height="1.15" fill="#d4d4d4" fill-opacity="0.25"/><rect x="1553.6" y="617.83" width="14.0" height="1.15" fill="#ce9178" fill-opacity="0.42"/><rect x="1567.5" y="617.83" width="0.9" height="1.15" fill="#d4d4d4" fill-opacity="0.25"/><rect x="1542.4" y="619.68" width="4.7" height="1.15" fill="#9cdcfe" fill-opacity="0.42"/><rect x="1547.1" y="619.68" width="0.9" height="1.15" fill="#d4d4d4" fill-opacity="0.25"/><rect x="1549.0" y="619.68" width="8.4" height="1.15" fill="#ce9178" fill-opacity="0.42"/><rect x="1538.7" y="621.54" width="0.9" height="1.15" fill="#d4d4d4" fill-opacity="0.3"/><rect x="1539.7" y="621.54" width="0.9" height="1.15" fill="#d4d4d4" fill-opacity="0.25"/><rect x="1538.7" y="623.39" width="14.0" height="1.15" fill="#9cdcfe" fill-opacity="0.42"/><rect x="1552.7" y="623.39" width="0.9" height="1.15" fill="#d4d4d4" fill-opacity="0.25"/><rect x="1554.5" y="623.39" width="0.9" height="1.15" fill="#d4d4d4" fill-opacity="0.3"/><rect x="1542.4" y="625.24" width="0.9" height="1.15" fill="#d4d4d4" fill-opacity="0.3"/><rect x="1546.2" y="627.09" width="5.6" height="1.15" fill="#9cdcfe" fill-opacity="0.42"/><rect x="1551.7" y="627.09" width="0.9" height="1.15" fill="#d4d4d4" fill-opacity="0.25"/><rect x="1553.6" y="627.09" width="8.4" height="1.15" fill="#ce9178" fill-opacity="0.42"/><rect x="1562.0" y="627.09" width="0.9" height="1.15" fill="#d4d4d4" fill-opacity="0.25"/><rect x="1546.2" y="628.94" width="9.3" height="1.15" fill="#9cdcfe" fill-opacity="0.42"/><rect x="1555.5" y="628.94" width="0.9" height="1.15" fill="#d4d4d4" fill-opacity="0.25"/><rect x="1557.3" y="628.94" width="14.0" height="1.15" fill="#ce9178" fill-opacity="0.42"/><rect x="1571.3" y="628.94" width="0.9" height="1.15" fill="#d4d4d4" fill-opacity="0.25"/><rect x="1546.2" y="630.80" width="4.7" height="1.15" fill="#9cdcfe" fill-opacity="0.42"/><rect x="1550.8" y="630.80" width="0.9" height="1.15" fill="#d4d4d4" fill-opacity="0.25"/><rect x="1552.7" y="630.80" width="8.4" height="1.15" fill="#ce9178" fill-opacity="0.42"/><rect x="1542.4" y="632.65" width="0.9" height="1.15" fill="#d4d4d4" fill-opacity="0.3"/><rect x="1538.7" y="634.50" width="0.9" height="1.15" fill="#d4d4d4" fill-opacity="0.3"/><rect x="1535.0" y="636.35" width="0.9" height="1.15" fill="#d4d4d4" fill-opacity="0.3"/><rect x="1531.3" y="638.20" width="0.9" height="1.15" fill="#d4d4d4" fill-opacity="0.3"/><rect x="1527.6" y="640.06" width="0.9" height="1.15" fill="#d4d4d4" fill-opacity="0.3"/><rect x="1528.5" y="640.06" width="0.9" height="1.15" fill="#d4d4d4" fill-opacity="0.25"/><rect x="1527.6" y="641.91" width="5.6" height="1.15" fill="#9cdcfe" fill-opacity="0.42"/><rect x="1533.1" y="641.91" width="0.9" height="1.15" fill="#d4d4d4" fill-opacity="0.25"/><rect x="1535.0" y="641.91" width="17.7" height="1.15" fill="#ce9178" fill-opacity="0.42"/><rect x="1552.7" y="641.91" width="0.9" height="1.15" fill="#d4d4d4" fill-opacity="0.25"/><rect x="1527.6" y="643.76" width="9.3" height="1.15" fill="#9cdcfe" fill-opacity="0.42"/><rect x="1536.9" y="643.76" width="0.9" height="1.15" fill="#d4d4d4" fill-opacity="0.25"/><rect x="1538.7" y="643.76" width="21.4" height="1.15" fill="#ce9178" fill-opacity="0.42"/><rect x="1560.1" y="643.76" width="0.9" height="1.15" fill="#d4d4d4" fill-opacity="0.25"/><rect x="1527.6" y="645.61" width="11.2" height="1.15" fill="#9cdcfe" fill-opacity="0.42"/><rect x="1538.7" y="645.61" width="0.9" height="1.15" fill="#d4d4d4" fill-opacity="0.25"/><rect x="1540.6" y="645.61" width="0.9" height="1.15" fill="#d4d4d4" fill-opacity="0.3"/><rect x="1531.3" y="647.46" width="0.9" height="1.15" fill="#d4d4d4" fill-opacity="0.3"/><rect x="1535.0" y="649.32" width="5.6" height="1.15" fill="#9cdcfe" fill-opacity="0.42"/><rect x="1540.6" y="649.32" width="0.9" height="1.15" fill="#d4d4d4" fill-opacity="0.25"/><rect x="1542.4" y="649.32" width="6.5" height="1.15" fill="#ce9178" fill-opacity="0.42"/><rect x="1549.0" y="649.32" width="0.9" height="1.15" fill="#d4d4d4" fill-opacity="0.25"/><rect x="1535.0" y="651.17" width="9.3" height="1.15" fill="#9cdcfe" fill-opacity="0.42"/><rect x="1544.3" y="651.17" width="0.9" height="1.15" fill="#d4d4d4" fill-opacity="0.25"/><rect x="1546.2" y="651.17" width="13.0" height="1.15" fill="#ce9178" fill-opacity="0.42"/><rect x="1559.2" y="651.17" width="0.9" height="1.15" fill="#d4d4d4" fill-opacity="0.25"/><rect x="1535.0" y="653.02" width="4.7" height="1.15" fill="#9cdcfe" fill-opacity="0.42"/><rect x="1539.7" y="653.02" width="0.9" height="1.15" fill="#d4d4d4" fill-opacity="0.25"/><rect x="1541.5" y="653.02" width="8.4" height="1.15" fill="#ce9178" fill-opacity="0.42"/><rect x="1549.9" y="653.02" width="0.9" height="1.15" fill="#d4d4d4" fill-opacity="0.25"/><rect x="1535.0" y="654.87" width="5.6" height="1.15" fill="#9cdcfe" fill-opacity="0.42"/><rect x="1540.6" y="654.87" width="0.9" height="1.15" fill="#d4d4d4" fill-opacity="0.25"/><rect x="1542.4" y="654.87" width="1.9" height="1.15" fill="#ce9178" fill-opacity="0.42"/><rect x="1531.3" y="656.72" width="0.9" height="1.15" fill="#d4d4d4" fill-opacity="0.3"/><rect x="1527.6" y="658.58" width="0.9" height="1.15" fill="#d4d4d4" fill-opacity="0.3"/><rect x="1528.5" y="658.58" width="0.9" height="1.15" fill="#d4d4d4" fill-opacity="0.25"/><rect x="1527.6" y="660.43" width="15.8" height="1.15" fill="#9cdcfe" fill-opacity="0.42"/><rect x="1543.4" y="660.43" width="0.9" height="1.15" fill="#d4d4d4" fill-opacity="0.25"/><rect x="1545.2" y="660.43" width="0.9" height="1.15" fill="#d4d4d4" fill-opacity="0.3"/><rect x="1531.3" y="662.28" width="0.9" height="1.15" fill="#d4d4d4" fill-opacity="0.3"/><rect x="1535.0" y="664.13" width="5.6" height="1.15" fill="#9cdcfe" fill-opacity="0.42"/><rect x="1540.6" y="664.13" width="0.9" height="1.15" fill="#d4d4d4" fill-opacity="0.25"/><rect x="1542.4" y="664.13" width="8.4" height="1.15" fill="#ce9178" fill-opacity="0.42"/><rect x="1550.8" y="664.13" width="0.9" height="1.15" fill="#d4d4d4" fill-opacity="0.25"/><rect x="1535.0" y="665.98" width="9.3" height="1.15" fill="#9cdcfe" fill-opacity="0.42"/><rect x="1544.3" y="665.98" width="0.9" height="1.15" fill="#d4d4d4" fill-opacity="0.25"/><rect x="1546.2" y="665.98" width="13.0" height="1.15" fill="#ce9178" fill-opacity="0.42"/><rect x="1559.2" y="665.98" width="0.9" height="1.15" fill="#d4d4d4" fill-opacity="0.25"/><rect x="1535.0" y="667.84" width="4.7" height="1.15" fill="#9cdcfe" fill-opacity="0.42"/><rect x="1539.7" y="667.84" width="0.9" height="1.15" fill="#d4d4d4" fill-opacity="0.25"/><rect x="1541.5" y="667.84" width="8.4" height="1.15" fill="#ce9178" fill-opacity="0.42"/><rect x="1549.9" y="667.84" width="0.9" height="1.15" fill="#d4d4d4" fill-opacity="0.25"/><rect x="1535.0" y="669.69" width="5.6" height="1.15" fill="#9cdcfe" fill-opacity="0.42"/><rect x="1540.6" y="669.69" width="0.9" height="1.15" fill="#d4d4d4" fill-opacity="0.25"/><rect x="1542.4" y="669.69" width="1.9" height="1.15" fill="#ce9178" fill-opacity="0.42"/><rect x="1531.3" y="671.54" width="0.9" height="1.15" fill="#d4d4d4" fill-opacity="0.3"/><rect x="1527.6" y="673.39" width="0.9" height="1.15" fill="#d4d4d4" fill-opacity="0.3"/><rect x="1528.5" y="673.39" width="0.9" height="1.15" fill="#d4d4d4" fill-opacity="0.25"/><rect x="1527.6" y="675.24" width="4.7" height="1.15" fill="#9cdcfe" fill-opacity="0.42"/><rect x="1532.2" y="675.24" width="0.9" height="1.15" fill="#d4d4d4" fill-opacity="0.25"/><rect x="1534.1" y="675.24" width="9.3" height="1.15" fill="#ce9178" fill-opacity="0.42"/><rect x="1523.8" y="677.10" width="0.9" height="1.15" fill="#d4d4d4" fill-opacity="0.3"/><rect x="1524.8" y="677.10" width="0.9" height="1.15" fill="#d4d4d4" fill-opacity="0.25"/><rect x="1523.8" y="678.95" width="0.9" height="1.15" fill="#d4d4d4" fill-opacity="0.3"/><rect x="1527.6" y="680.80" width="5.6" height="1.15" fill="#9cdcfe" fill-opacity="0.42"/><rect x="1533.1" y="680.80" width="0.9" height="1.15" fill="#d4d4d4" fill-opacity="0.25"/><rect x="1535.0" y="680.80" width="0.9" height="1.15" fill="#d4d4d4" fill-opacity="0.3"/><rect x="1531.3" y="682.65" width="9.3" height="1.15" fill="#9cdcfe" fill-opacity="0.42"/><rect x="1540.6" y="682.65" width="0.9" height="1.15" fill="#d4d4d4" fill-opacity="0.25"/><rect x="1542.4" y="682.65" width="9.3" height="1.15" fill="#ce9178" fill-opacity="0.42"/><rect x="1551.7" y="682.65" width="0.9" height="1.15" fill="#d4d4d4" fill-opacity="0.25"/><rect x="1531.3" y="684.50" width="4.7" height="1.15" fill="#9cdcfe" fill-opacity="0.42"/><rect x="1535.9" y="684.50" width="0.9" height="1.15" fill="#d4d4d4" fill-opacity="0.25"/><rect x="1537.8" y="684.50" width="8.4" height="1.15" fill="#ce9178" fill-opacity="0.42"/><rect x="1546.2" y="684.50" width="0.9" height="1.15" fill="#d4d4d4" fill-opacity="0.25"/><rect x="1531.3" y="686.36" width="11.2" height="1.15" fill="#9cdcfe" fill-opacity="0.42"/><rect x="1542.4" y="686.36" width="0.9" height="1.15" fill="#d4d4d4" fill-opacity="0.25"/><rect x="1544.3" y="686.36" width="0.9" height="1.15" fill="#d4d4d4" fill-opacity="0.3"/><rect x="1535.0" y="688.21" width="0.9" height="1.15" fill="#d4d4d4" fill-opacity="0.3"/><rect x="1538.7" y="690.06" width="5.6" height="1.15" fill="#9cdcfe" fill-opacity="0.42"/><rect x="1544.3" y="690.06" width="0.9" height="1.15" fill="#d4d4d4" fill-opacity="0.25"/><rect x="1546.2" y="690.06" width="0.9" height="1.15" fill="#d4d4d4" fill-opacity="0.3"/><rect x="1542.4" y="691.91" width="9.3" height="1.15" fill="#9cdcfe" fill-opacity="0.42"/><rect x="1551.7" y="691.91" width="0.9" height="1.15" fill="#d4d4d4" fill-opacity="0.25"/><rect x="1553.6" y="691.91" width="9.3" height="1.15" fill="#ce9178" fill-opacity="0.42"/><rect x="1562.9" y="691.91" width="0.9" height="1.15" fill="#d4d4d4" fill-opacity="0.25"/><rect x="1542.4" y="693.76" width="4.7" height="1.15" fill="#9cdcfe" fill-opacity="0.42"/><rect x="1547.1" y="693.76" width="0.9" height="1.15" fill="#d4d4d4" fill-opacity="0.25"/><rect x="1549.0" y="693.76" width="9.3" height="1.15" fill="#ce9178" fill-opacity="0.42"/><rect x="1558.2" y="693.76" width="0.9" height="1.15" fill="#d4d4d4" fill-opacity="0.25"/><rect x="1542.4" y="695.62" width="11.2" height="1.15" fill="#9cdcfe" fill-opacity="0.42"/><rect x="1553.6" y="695.62" width="0.9" height="1.15" fill="#d4d4d4" fill-opacity="0.25"/><rect x="1555.5" y="695.62" width="0.9" height="1.15" fill="#d4d4d4" fill-opacity="0.3"/><rect x="1546.2" y="697.47" width="0.9" height="1.15" fill="#d4d4d4" fill-opacity="0.3"/><rect x="1549.9" y="699.32" width="11.2" height="1.15" fill="#9cdcfe" fill-opacity="0.42"/><rect x="1561.0" y="699.32" width="0.9" height="1.15" fill="#d4d4d4" fill-opacity="0.25"/><rect x="1562.9" y="699.32" width="0.9" height="1.15" fill="#d4d4d4" fill-opacity="0.3"/><rect x="1553.6" y="701.17" width="10.2" height="1.15" fill="#9cdcfe" fill-opacity="0.42"/><rect x="1563.8" y="701.17" width="0.9" height="1.15" fill="#d4d4d4" fill-opacity="0.25"/><rect x="1565.7" y="701.17" width="0.9" height="1.15" fill="#d4d4d4" fill-opacity="0.3"/><rect x="1557.3" y="703.02" width="0.9" height="1.15" fill="#d4d4d4" fill-opacity="0.3"/><rect x="1561.0" y="704.88" width="5.6" height="1.15" fill="#9cdcfe" fill-opacity="0.42"/><rect x="1566.6" y="704.88" width="0.9" height="1.15" fill="#d4d4d4" fill-opacity="0.25"/><rect x="1568.5" y="704.88" width="7.4" height="1.15" fill="#ce9178" fill-opacity="0.42"/><rect x="1575.9" y="704.88" width="0.9" height="1.15" fill="#d4d4d4" fill-opacity="0.25"/><rect x="1561.0" y="706.73" width="9.3" height="1.15" fill="#9cdcfe" fill-opacity="0.42"/><rect x="1570.3" y="706.73" width="0.9" height="1.15" fill="#d4d4d4" fill-opacity="0.25"/><rect x="1572.2" y="706.73" width="11.2" height="1.15" fill="#ce9178" fill-opacity="0.42"/><rect x="1583.4" y="706.73" width="0.9" height="1.15" fill="#d4d4d4" fill-opacity="0.25"/><rect x="1561.0" y="708.58" width="4.7" height="1.15" fill="#9cdcfe" fill-opacity="0.42"/><rect x="1565.7" y="708.58" width="0.9" height="1.15" fill="#d4d4d4" fill-opacity="0.25"/><rect x="1567.5" y="708.58" width="8.4" height="1.15" fill="#ce9178" fill-opacity="0.42"/><rect x="1575.9" y="708.58" width="0.9" height="1.15" fill="#d4d4d4" fill-opacity="0.25"/><rect x="1561.0" y="710.43" width="5.6" height="1.15" fill="#9cdcfe" fill-opacity="0.42"/><rect x="1566.6" y="710.43" width="0.9" height="1.15" fill="#d4d4d4" fill-opacity="0.25"/><rect x="1568.5" y="710.43" width="1.9" height="1.15" fill="#ce9178" fill-opacity="0.42"/><rect x="1570.3" y="710.43" width="0.9" height="1.15" fill="#d4d4d4" fill-opacity="0.25"/><rect x="1561.0" y="712.28" width="6.5" height="1.15" fill="#9cdcfe" fill-opacity="0.42"/><rect x="1567.5" y="712.28" width="0.9" height="1.15" fill="#d4d4d4" fill-opacity="0.25"/><rect x="1569.4" y="712.28" width="2.8" height="1.15" fill="#ce9178" fill-opacity="0.42"/><rect x="1557.3" y="714.14" width="0.9" height="1.15" fill="#d4d4d4" fill-opacity="0.3"/><rect x="1558.2" y="714.14" width="0.9" height="1.15" fill="#d4d4d4" fill-opacity="0.25"/><rect x="1557.3" y="715.99" width="0.9" height="1.15" fill="#d4d4d4" fill-opacity="0.3"/></svg></div>
 </div>
</div>

<!-- TERMINAL -->
<div id="termbar" class="abs" style="left:329.4px;top:718px;width:1270.6px;height:33px;background:#2a2c3f;border-top:1px solid #2f3146"></div>
<svg class="ico" style="left:335.700px;top:729.800px" width="11" height="11" viewBox="0 0 11 11"><path d="M1 1.100L5.500 5.300 10 1.100M1 5.800L5.500 10 10 5.800" fill="none" stroke="#bfc0d8" stroke-width="1.300"/></svg>
<div class="t" style="left:1078.500px;top:730px;font-size:12.300px;color:#b0b1c9">0</div>
<div class="abs" style="left:1108px;top:728px;width:14.500px;height:14.500px;border:1px solid #474a62;border-radius:2px;background:#2e3045"></div>
<div class="t" style="left:1130px;top:729.500px;font-size:12.300px;color:#b4b5cd;letter-spacing:.16px">Listen on all transactions</div>
<svg class="ico" style="left:1291.500px;top:728.500px" width="13" height="13" viewBox="0 0 13 13"><circle cx="5.300" cy="5.300" r="3.900" fill="none" stroke="#c8c9dc" stroke-width="1.500"/><path d="M8.200 8.200L11.800 11.800" stroke="#c8c9dc" stroke-width="1.700" stroke-linecap="round"/></svg>
<div class="abs" style="left:1313.400px;top:719.400px;width:256.200px;height:31px;background:#35374c;border:1px solid #3d3f56;border-radius:2px"></div>
<div class="t" style="left:1325.500px;top:728.500px;font-size:13.300px;color:#8e8fa3;letter-spacing:.1px">Filter with transaction hash or address</div>
<svg class="ico" style="left:1580px;top:729px" width="13" height="13" viewBox="0 0 13 13"><circle cx="6.500" cy="6.500" r="5.300" fill="none" stroke="#c8c9dc" stroke-width="1.700"/><path d="M2.900 2.900L10.100 10.100" stroke="#c8c9dc" stroke-width="1.700"/></svg>

<div class="t mono" style="left:366px;top:755.500px;font-size:11.100px;color:#b5b6d0">Type the library name to see available commands.</div>
<div class="t mono" style="left:366px;top:770.500px;font-size:10px;color:#b5b6d0">creation of Storage pending...</div>

<svg class="ico" style="left:365px;top:812px" width="20" height="20" viewBox="0 0 20 20"><circle cx="10" cy="10" r="9.300" fill="#2fbf8f"/><path d="M5.800 10.200L8.800 13 14.200 7" fill="none" stroke="#222336" stroke-width="1.900"/></svg>
<div class="t mono" style="left:403px;top:817.300px;font-size:11.050px;color:#b5b6d0"><b>[block:5583405 txIndex:4]</b></div>
<div class="t mono" style="left:579.200px;top:817.300px;font-size:11.050px;letter-spacing:-.056px;color:#b5b6d0"><b>from:</b> 0xa03...85ac4 <b>to:</b> Storage.(constructor) <b>value:</b> 0 wei <b>data:</b> 0x608...30033 <b>logs:</b> 0 <b>hash:</b> 0x76d...57ad9</div>
<div class="abs" style="left:1480px;top:809px;width:50px;height:26px;background:#0a7aa6;border-radius:2px"></div>
<div class="t mono" style="left:1480px;top:817.700px;width:50px;text-align:center;font-size:10.900px;font-weight:bold;color:#fff;letter-spacing:.1px">Debug</div>
<svg class="ico" style="left:1539px;top:816px" width="17" height="11" viewBox="0 0 17 11"><path d="M1.700 1.800L8.500 8.600 15.300 1.800" fill="none" stroke="#bdbdd8" stroke-width="2.100"/></svg>
<div class="abs" style="left:1585px;top:825px;width:7.400px;height:36px;background:#40435a;border-radius:3.700px"></div>
<div class="t mono" style="left:336.500px;top:870.500px;font-size:11.100px;font-weight:bold;color:#c8c9dc">&gt;</div>


<!-- STATUS BAR -->
<div id="status">
<div class="abs" style="left:0;top:-895px;width:1600px;height:919px">
 <svg class="ico" style="left:514px;top:901.300px" width="7.600" height="11" viewBox="0 0 9 13"><path d="M4.500.6a3.700 3.700 0 0 1 2.300 6.600c-.5.500-.7 1-.7 1.600H2.900c0-.6-.2-1.100-.7-1.600A3.700 3.700 0 0 1 4.500.6z" fill="#35c28f"/><rect x="2.900" y="9.600" width="3.200" height="1.200" fill="#35c28f"/><rect x="3.400" y="11.300" width="2.200" height="1" fill="#35c28f"/></svg>
 <div class="t" style="left:529px;top:902.800px;font-size:10.100px;font-weight:bold;color:#fff;letter-spacing:-.12px">Did you know?</div>
 <div class="t" style="left:606.500px;top:902.800px;font-size:10.100px;color:#fff;letter-spacing:.105px">To prototype using the Gnosis safe multi sig wallet: create a multisig workspace.</div>
 <div class="t" style="left:1383px;top:902.800px;font-size:10.100px;color:#fff;letter-spacing:0px">RemixAI Copilot (enabled)</div>
 <div class="abs" style="left:1512px;top:895px;width:88px;height:24px;background:#cb7739"></div>
 <svg class="ico" style="left:1519px;top:900.500px" width="13" height="12" viewBox="0 0 13 12"><path d="M6.500 1.200L12 10.800H1z" fill="none" stroke="#fff" stroke-width="1.200" stroke-linejoin="round"/><path d="M6.500 4.600V7.600M6.500 8.600V9.600" stroke="#fff" stroke-width="1.100"/></svg>
 <div class="t" style="left:1539px;top:902.800px;font-size:10.100px;color:#fff;letter-spacing:.12px">Scam Alert</div>
 <div class="abs" style="left:1592px;top:911px;width:8px;height:8px;background:radial-gradient(circle at 0 0,rgba(0,0,0,0) 7.200px,#20222e 8px)"></div>
 <!-- url tooltip -->
 <div class="abs" style="left:-1px;top:899px;width:162px;height:21px;background:#ffd9e1;border:1px solid #e9b9c4;border-radius:0 4px 0 0"></div>
 <div class="t" style="left:5px;top:903px;font-size:11.900px;color:#3c3f4d;letter-spacing:.1px;-webkit-text-stroke:0">https://remix.ethereum.org/#</div>
</div>

</div>
</body>
</html>
